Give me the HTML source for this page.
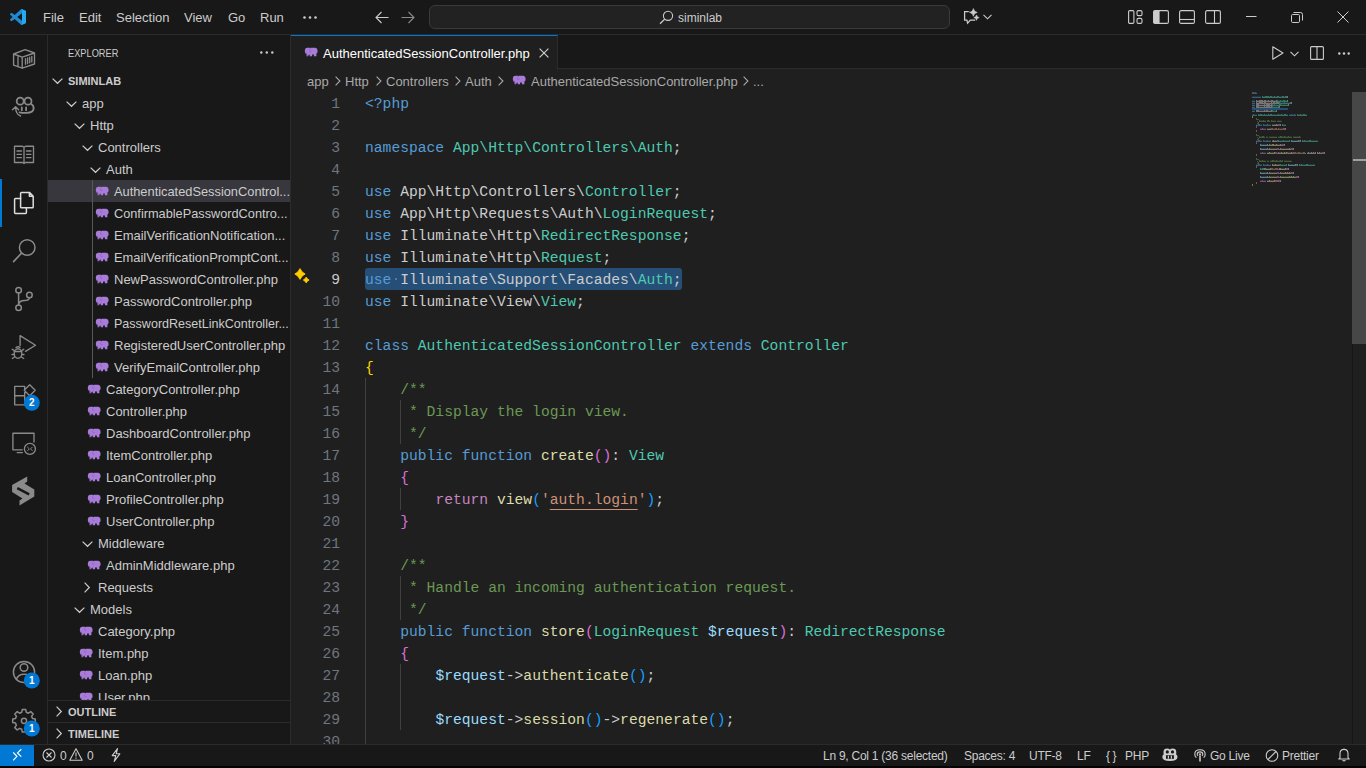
<!DOCTYPE html>
<html><head><meta charset="utf-8">
<style>
*{box-sizing:border-box}
html,body{margin:0;padding:0}
body{width:1366px;height:768px;overflow:hidden;position:relative;background:#1f1f1f;font-family:"Liberation Sans",sans-serif;color:#cccccc}
.a{position:absolute}
svg{position:absolute;overflow:visible}
#title{left:0;top:0;width:1366px;height:35px;background:#181818;border-bottom:1px solid #2b2b2b}
.menu{top:1px;height:34px;line-height:34px;font-size:13px;color:#cccccc;white-space:nowrap}
#act{left:0;top:35px;width:48px;height:709px;background:#181818;border-right:1px solid #2b2b2b}
#side{left:48px;top:35px;width:243px;height:709px;background:#181818;border-right:1px solid #2b2b2b}
.ti{margin-top:1px;height:22px;line-height:22px;font-size:13px;color:#cccccc;white-space:nowrap}
#status{left:0;top:744px;width:1366px;height:24px;background:#181818;border-top:1px solid #2b2b2b}
.st{font-size:12px;letter-spacing:-0.25px;color:#cccccc;white-space:nowrap}
.code{left:365px;height:22px;line-height:22px;font-family:"Liberation Mono",monospace;font-size:14.667px;white-space:pre;color:#cccccc}
.ln{left:300px;width:40px;text-align:right;height:22px;line-height:22px;font-family:"Liberation Mono",monospace;font-size:14.667px;color:#6e7681}
.k{color:#569cd6}.t{color:#4ec9b0}.f{color:#dcdcaa}.v{color:#9cdcfe}.s{color:#ce9178}.c{color:#6a9955}
.p{color:#c586c0}.u{text-decoration:underline;text-decoration-thickness:1px;text-underline-offset:5px}.b1{color:#ffd700}.b2{color:#da70d6}.b3{color:#179fff}
</style></head><body>
<!-- TITLE BAR -->
<div id="title" class="a"></div>
<svg style="left:10px;top:9px" width="16" height="16" viewBox="0 0 100 100"><path fill="#1f8ad2" d="M96.5 10.8 75.9.9a6.2 6.2 0 0 0-7.1 1.2L29.4 38 12.2 25a4.1 4.1 0 0 0-5.3.2L1.4 30.3a4.1 4.1 0 0 0 0 6.1L16.3 50 1.4 63.6a4.1 4.1 0 0 0 0 6.1l5.5 5a4.1 4.1 0 0 0 5.3.2l17.2-13L68.8 97.9a6.2 6.2 0 0 0 7.1 1.2l20.6-9.9a6.2 6.2 0 0 0 3.5-5.6V16.4a6.2 6.2 0 0 0-3.5-5.6zM75 72.7 45.1 50 75 27.3v45.4z"/><path fill="#27a7f0" d="M68.8 2.1a6.2 6.2 0 0 1 7.1-1.2l20.6 9.9a6.2 6.2 0 0 1 3.5 5.6v67.2a6.2 6.2 0 0 1-3.5 5.6l-20.6 9.9a6.2 6.2 0 0 1-7.1-1.2c2.3 2.3 6.2.7 6.2-2.6V4.7c0-3.3-3.9-4.9-6.2-2.6z"/></svg>
<div class="a menu" style="left:43px">File</div>
<div class="a menu" style="left:79px">Edit</div>
<div class="a menu" style="left:116px">Selection</div>
<div class="a menu" style="left:184px">View</div>
<div class="a menu" style="left:228px">Go</div>
<div class="a menu" style="left:260px">Run</div>
<svg style="left:303px;top:16px" width="14" height="3"><circle cx="1.5" cy="1.5" r="1.3" fill="#cccccc"/><circle cx="7" cy="1.5" r="1.3" fill="#cccccc"/><circle cx="12.5" cy="1.5" r="1.3" fill="#cccccc"/></svg>
<svg style="left:375px;top:11px" width="14" height="13" viewBox="0 0 14 13"><path d="M6.5 1 1 6.5 6.5 12M1 6.5H13.5" fill="none" stroke="#cccccc" stroke-width="1.1"/></svg>
<svg style="left:401px;top:11px" width="14" height="13" viewBox="0 0 14 13"><path d="M7.5 1 13 6.5 7.5 12M13 6.5H0.5" fill="none" stroke="#8a8a8a" stroke-width="1.1"/></svg>
<div class="a" style="left:429px;top:5px;width:521px;height:24px;border:1px solid #3a3a3a;border-radius:6px;background:#222222"></div>
<svg style="left:659px;top:10px" width="15" height="15" viewBox="0 0 15 15"><circle cx="9" cy="5.8" r="4.6" fill="none" stroke="#cccccc" stroke-width="1.1"/><path d="M5.7 9.1 1 13.8" stroke="#cccccc" stroke-width="1.3"/></svg>
<div class="a menu" style="left:678px;font-size:12px;top:1px">siminlab</div>
<svg style="left:958px;top:4px" width="24" height="24" viewBox="958 4 24 24"><path d="M969.6 11.6H964.6V20.2H966.9L967.6 23.2 970.3 20.2H975.3" fill="none" stroke="#cccccc" stroke-width="1.25"/><path d="M973.4 8.100000000000001Q973.92 11.88 977.6999999999999 12.4Q973.92 12.92 973.4 16.7Q972.88 12.92 969.1 12.4Q972.88 11.88 973.4 8.100000000000001Z" fill="#181818" stroke="#181818" stroke-width="1.6" stroke-linejoin="round"/><path d="M976.5 14.500000000000002Q976.87 17.23 979.6 17.6Q976.87 17.97 976.5 20.700000000000003Q976.13 17.97 973.4 17.6Q976.13 17.23 976.5 14.500000000000002Z" fill="#181818" stroke="#181818" stroke-width="1.4" stroke-linejoin="round"/><path d="M973.4 8.600000000000001Q973.86 11.94 977.1999999999999 12.4Q973.86 12.86 973.4 16.2Q972.94 12.86 969.6 12.4Q972.94 11.94 973.4 8.600000000000001Z" fill="#cccccc" stroke="#cccccc" stroke-width="0.7" stroke-linejoin="round"/><path d="M976.5 14.900000000000002Q976.82 17.28 979.2 17.6Q976.82 17.92 976.5 20.3Q976.18 17.92 973.8 17.6Q976.18 17.28 976.5 14.900000000000002Z" fill="#cccccc" stroke="#cccccc" stroke-width="0.6" stroke-linejoin="round"/></svg>
<svg style="left:983px;top:14px" width="9" height="6" viewBox="0 0 9 6"><path d="M0.5 0.8 4.5 4.8 8.5 0.8" fill="none" stroke="#cccccc" stroke-width="1.1"/></svg>
<svg style="left:1128px;top:10px" width="15" height="14" viewBox="0 0 15 14"><rect x="0.6" y="0.6" width="5.3" height="12.8" rx="1.2" fill="none" stroke="#cccccc" stroke-width="1.1"/><rect x="9" y="0.6" width="5" height="5" rx="1.4" fill="none" stroke="#cccccc" stroke-width="1.1"/><rect x="9" y="8.4" width="5" height="5" rx="1.4" fill="none" stroke="#cccccc" stroke-width="1.1"/></svg>
<svg style="left:1153px;top:10px" width="16" height="14" viewBox="0 0 16 14"><rect x="0.6" y="0.6" width="14.8" height="12.8" rx="1.5" fill="none" stroke="#cccccc" stroke-width="1.1"/><rect x="0.6" y="0.6" width="6" height="12.8" fill="#cccccc"/></svg>
<svg style="left:1179px;top:10px" width="16" height="14" viewBox="0 0 16 14"><rect x="0.6" y="0.6" width="14.8" height="12.8" rx="1.5" fill="none" stroke="#cccccc" stroke-width="1.1"/><path d="M0.6 9.5H15.4" stroke="#cccccc" stroke-width="1.1"/></svg>
<svg style="left:1205px;top:10px" width="16" height="14" viewBox="0 0 16 14"><rect x="0.6" y="0.6" width="14.8" height="12.8" rx="1.5" fill="none" stroke="#cccccc" stroke-width="1.1"/><path d="M9.5 0.6V13.4" stroke="#cccccc" stroke-width="1.1"/></svg>
<svg style="left:1246px;top:16px" width="11" height="2"><path d="M0 0.5H10.5" stroke="#cccccc" stroke-width="1"/></svg>
<svg style="left:1291px;top:12px" width="12" height="11" viewBox="0 0 12 11"><rect x="0.5" y="2.5" width="8" height="8" rx="1.2" fill="none" stroke="#cccccc" stroke-width="1"/><path d="M2.5 0.5H9.5Q11.5 0.5 11.5 2.5V8.5" fill="none" stroke="#cccccc" stroke-width="1"/></svg>
<svg style="left:1337px;top:11px" width="12" height="12" viewBox="0 0 12 12"><path d="M0.5 0.5 11.5 11.5M11.5 0.5 0.5 11.5" stroke="#cccccc" stroke-width="1"/></svg>
<div id="act" class="a"></div>
<div class="a" style="left:0;top:179px;width:2px;height:48px;background:#0078d4"></div>
<svg style="left:0;top:0" width="48" height="768" viewBox="0 0 48 768">
<g fill="none" stroke="#8a8a8a" stroke-width="1.35" stroke-linejoin="round" stroke-linecap="round">
<path d="M13.6 54 25.1 49.6 34.5 53V64L22.2 68.2 13.6 65.2Z M13.6 54 22.2 57.1 34.5 53 M22.2 57.1V68.2 M18 55.7V66.7 M25.5 58.6V64.2 M27.6 57.9V63.5 M29.7 57.2V62.8 M31.8 56.5V62.1"/>
<g stroke-width="1.8"><circle cx="20.2" cy="101.2" r="3.5"/><circle cx="28" cy="101.2" r="3.5"/>
<path d="M31.5 104.2Q34 105.5 33.6 109Q33 112.5 27 112.8Q22 113 19.5 112.3"/>
<path d="M21.8 107.5V110.3M26.1 107.5V110.3"/></g>
<path d="M20.5 116Q15.8 114.5 15.6 107M12.5 109.8 15.6 106.8 18.6 109.8"/>
<path d="M14.5 146.2H22.5L24 147.3 25.5 146.2H33.5V162.5H25.5L24 163.5 22.5 162.5H14.5Z M24 147.3V163 M17 151H21.5M17 154.3H21.5M17 157.6H21.5M26.5 151H31M26.5 154.3H31M26.5 157.6H31"/>
<path d="M21.4 192.4H29.4L33.2 196.2V206.9Q33.2 207.7 32.4 207.7H21.4Q20.6 207.7 20.6 206.9V193.2Q20.6 192.4 21.4 192.4Z M29.4 192.4V196.2H33.2" stroke="#dcdcdc" stroke-width="1.5"/><path d="M20.6 198.5H15.4Q14.6 198.5 14.6 199.3V212.6Q14.6 213.4 15.4 213.4H25.6Q26.4 213.4 26.4 212.6V207.7" stroke="#dcdcdc" stroke-width="1.5"/>
<circle cx="27.2" cy="247.5" r="7.8" stroke-width="1.5"/><path d="M21.6 253.1 13.5 261.6" stroke-width="1.6"/>
<g stroke-width="1.5"><circle cx="18.6" cy="290.2" r="2.8"/><circle cx="18.6" cy="307.8" r="2.8"/><circle cx="29.4" cy="295" r="2.8"/><path d="M18.6 293V305 M18.6 304.6Q19.2 300.8 24.5 300.6Q28.8 300.4 29.4 297.8"/></g>
<path d="M20.1 345.6V335.6L35.5 345.2 25.5 351.4"/>
<ellipse cx="18" cy="353.5" rx="3.8" ry="4.8"/><path d="M14.2 351.5H21.8M12.3 349.3 14.3 350.5M23.7 349.3 21.7 350.5M12 354.5H14.2M24 354.5H21.8M12.3 358.5 14.6 357M23.7 358.5 21.4 357M16 347.5Q18 346 20 347.5"/>
<path d="M14.7 386.3H24.7V404.8H14.7Z M14.7 395.7H24.7 M29.7 384.7 35.2 390.2 29.7 395.7 24.2 390.2Z"/>
<path d="M34 442V433.2H12.9V449.8H22.2M17.2 452.6H22.4"/>
<circle cx="29.9" cy="448.9" r="5.5"/><path d="M27.6 447.2 29.3 448.9 27.6 450.6M32.2 447.2 30.5 448.9 32.2 450.6" stroke-width="1"/>
<g stroke-width="1.5"><circle cx="24" cy="672" r="10.6"/><circle cx="24" cy="667.5" r="3.8"/><path d="M16.3 679.5Q18 674.3 24 674.3Q30 674.3 31.7 679.5"/></g>
</g>
<path d="M27.2 476.5V481.5L24.5 483.5 34.3 489.5V496.5L19.5 505.5V500.5L22.5 498.5 12.1 492V485Z" fill="#8a8a8a"/>
<path d="M17.3 488.2 29.2 494.3" stroke="#181818" stroke-width="2.6"/>
<path fill="none" stroke="#8a8a8a" stroke-width="1.5" stroke-linejoin="round" d="M22.3 709.5H25.7L26.3 712.3 28.4 713.2 30.8 711.6 33.2 714 31.6 716.4 32.5 718.5 35.3 719.1V722.5L32.5 723.1 31.6 725.2 33.2 727.6 30.8 730 28.4 728.4 26.3 729.3 25.7 732.1H22.3L21.7 729.3 19.6 728.4 17.2 730 14.8 727.6 16.4 725.2 15.5 723.1 12.7 722.5V719.1L15.5 718.5 16.4 716.4 14.8 714 17.2 711.6 19.6 713.2 21.7 712.3Z"/>
<circle cx="24" cy="720.8" r="2.6" fill="none" stroke="#8a8a8a" stroke-width="1.5"/>
<circle cx="31.8" cy="402.8" r="8" fill="#0078d4"/><text x="31.8" y="406.3" text-anchor="middle" font-family="Liberation Sans" font-weight="bold" font-size="10" fill="#ffffff">2</text>
<circle cx="31.8" cy="680.5" r="8" fill="#0078d4"/><text x="31.8" y="684" text-anchor="middle" font-family="Liberation Sans" font-weight="bold" font-size="10" fill="#ffffff">1</text>
<circle cx="31.8" cy="728.5" r="8" fill="#0078d4"/><text x="31.8" y="732" text-anchor="middle" font-family="Liberation Sans" font-weight="bold" font-size="10" fill="#ffffff">1</text>
</svg>
<div id="side" class="a"></div>
<svg width="0" height="0" style="left:0;top:0"><defs><symbol id="el" viewBox="0 0 14 10"><path fill="#a87cd8" d="M0.8 4.2Q0.8 0.8 3.4 0.8H6L6.5 1.3 7 0.8H11Q13.6 0.9 13.6 4.4Q13.6 5.8 12.4 6.6V9.3H9.9V7.4H8.1V9.3H5.7V7.6Q5 7.6 4.7 8.1L4 9.3H2.6L2.7 7.8Q0.8 6.6 0.8 4.2Z"/><path d="M6.5 1.3Q5.2 2.5 5.6 4.2Q6.2 4.9 7.6 4.5" fill="none" stroke="#8a62bd" stroke-width="0.7"/><path d="M2 5.6Q3 6.8 3.2 9.2" fill="none" stroke="#6a4a96" stroke-width="0.6"/></symbol></defs></svg>
<div class="a" style="left:68px;top:36px;height:35px;line-height:35px;font-size:11px;color:#cccccc;transform:scaleX(0.84);transform-origin:0 0;white-space:nowrap">EXPLORER</div>
<svg style="left:260px;top:51px" width="14" height="3"><circle cx="1.3" cy="1.5" r="1.2" fill="#cccccc"/><circle cx="6.8" cy="1.5" r="1.2" fill="#cccccc"/><circle cx="12.3" cy="1.5" r="1.2" fill="#cccccc"/></svg>
<svg style="left:52px;top:78px" width="11" height="6" viewBox="0 0 11 6"><path d="M0.6 0.6 5.5 5.3 10.4 0.6" fill="none" stroke="#cccccc" stroke-width="1.2"/></svg>
<div class="a" style="left:68px;top:70px;height:22px;line-height:22px;font-size:11px;font-weight:bold;color:#cccccc;white-space:nowrap">SIMINLAB</div>
<div class="a" style="left:0;top:0;width:290px;height:700px;overflow:hidden">
<div class="a" style="left:48px;top:180px;width:242px;height:22px;background:#37373d"></div>
<div class="a" style="left:92px;top:180px;width:1px;height:198px;background:#585858"></div>
<svg style="left:66px;top:101px" width="11" height="6" viewBox="0 0 11 6"><path d="M0.6 0.6 5.5 5.3 10.4 0.6" fill="none" stroke="#cccccc" stroke-width="1.2"/></svg>
<div class="a ti" style="left:82px;top:92px">app</div>
<svg style="left:74px;top:123px" width="11" height="6" viewBox="0 0 11 6"><path d="M0.6 0.6 5.5 5.3 10.4 0.6" fill="none" stroke="#cccccc" stroke-width="1.2"/></svg>
<div class="a ti" style="left:90px;top:114px">Http</div>
<svg style="left:82px;top:145px" width="11" height="6" viewBox="0 0 11 6"><path d="M0.6 0.6 5.5 5.3 10.4 0.6" fill="none" stroke="#cccccc" stroke-width="1.2"/></svg>
<div class="a ti" style="left:98px;top:136px">Controllers</div>
<svg style="left:90px;top:167px" width="11" height="6" viewBox="0 0 11 6"><path d="M0.6 0.6 5.5 5.3 10.4 0.6" fill="none" stroke="#cccccc" stroke-width="1.2"/></svg>
<div class="a ti" style="left:106px;top:158px">Auth</div>
<svg style="left:95px;top:186px" width="14" height="10" viewBox="0 0 14 10"><use href="#el"/></svg>
<div class="a ti" style="left:114px;transform:scaleX(0.986);transform-origin:0 0;top:180px">AuthenticatedSessionControl...</div>
<svg style="left:95px;top:208px" width="14" height="10" viewBox="0 0 14 10"><use href="#el"/></svg>
<div class="a ti" style="left:114px;transform:scaleX(0.98);transform-origin:0 0;top:202px">ConfirmablePasswordContro...</div>
<svg style="left:95px;top:230px" width="14" height="10" viewBox="0 0 14 10"><use href="#el"/></svg>
<div class="a ti" style="left:114px;transform:scaleX(1.0);transform-origin:0 0;top:224px">EmailVerificationNotification...</div>
<svg style="left:95px;top:252px" width="14" height="10" viewBox="0 0 14 10"><use href="#el"/></svg>
<div class="a ti" style="left:114px;transform:scaleX(0.99);transform-origin:0 0;top:246px">EmailVerificationPromptCont...</div>
<svg style="left:95px;top:274px" width="14" height="10" viewBox="0 0 14 10"><use href="#el"/></svg>
<div class="a ti" style="left:114px;width:176px;overflow:hidden;text-overflow:ellipsis;top:268px">NewPasswordController.php</div>
<svg style="left:95px;top:296px" width="14" height="10" viewBox="0 0 14 10"><use href="#el"/></svg>
<div class="a ti" style="left:114px;width:176px;overflow:hidden;text-overflow:ellipsis;top:290px">PasswordController.php</div>
<svg style="left:95px;top:318px" width="14" height="10" viewBox="0 0 14 10"><use href="#el"/></svg>
<div class="a ti" style="left:114px;transform:scaleX(0.964);transform-origin:0 0;top:312px">PasswordResetLinkController...</div>
<svg style="left:95px;top:340px" width="14" height="10" viewBox="0 0 14 10"><use href="#el"/></svg>
<div class="a ti" style="left:114px;width:176px;overflow:hidden;text-overflow:ellipsis;top:334px">RegisteredUserController.php</div>
<svg style="left:95px;top:362px" width="14" height="10" viewBox="0 0 14 10"><use href="#el"/></svg>
<div class="a ti" style="left:114px;width:176px;overflow:hidden;text-overflow:ellipsis;top:356px">VerifyEmailController.php</div>
<svg style="left:87px;top:384px" width="14" height="10" viewBox="0 0 14 10"><use href="#el"/></svg>
<div class="a ti" style="left:106px;top:378px">CategoryController.php</div>
<svg style="left:87px;top:406px" width="14" height="10" viewBox="0 0 14 10"><use href="#el"/></svg>
<div class="a ti" style="left:106px;top:400px">Controller.php</div>
<svg style="left:87px;top:428px" width="14" height="10" viewBox="0 0 14 10"><use href="#el"/></svg>
<div class="a ti" style="left:106px;top:422px">DashboardController.php</div>
<svg style="left:87px;top:450px" width="14" height="10" viewBox="0 0 14 10"><use href="#el"/></svg>
<div class="a ti" style="left:106px;top:444px">ItemController.php</div>
<svg style="left:87px;top:472px" width="14" height="10" viewBox="0 0 14 10"><use href="#el"/></svg>
<div class="a ti" style="left:106px;top:466px">LoanController.php</div>
<svg style="left:87px;top:494px" width="14" height="10" viewBox="0 0 14 10"><use href="#el"/></svg>
<div class="a ti" style="left:106px;top:488px">ProfileController.php</div>
<svg style="left:87px;top:516px" width="14" height="10" viewBox="0 0 14 10"><use href="#el"/></svg>
<div class="a ti" style="left:106px;top:510px">UserController.php</div>
<svg style="left:82px;top:541px" width="11" height="6" viewBox="0 0 11 6"><path d="M0.6 0.6 5.5 5.3 10.4 0.6" fill="none" stroke="#cccccc" stroke-width="1.2"/></svg>
<div class="a ti" style="left:98px;top:532px">Middleware</div>
<svg style="left:87px;top:560px" width="14" height="10" viewBox="0 0 14 10"><use href="#el"/></svg>
<div class="a ti" style="left:106px;top:554px">AdminMiddleware.php</div>
<svg style="left:84px;top:582px" width="6" height="11" viewBox="0 0 6 11"><path d="M0.6 0.6 5.3 5.5 0.6 10.4" fill="none" stroke="#cccccc" stroke-width="1.2"/></svg>
<div class="a ti" style="left:98px;top:576px">Requests</div>
<svg style="left:74px;top:607px" width="11" height="6" viewBox="0 0 11 6"><path d="M0.6 0.6 5.5 5.3 10.4 0.6" fill="none" stroke="#cccccc" stroke-width="1.2"/></svg>
<div class="a ti" style="left:90px;top:598px">Models</div>
<svg style="left:79px;top:626px" width="14" height="10" viewBox="0 0 14 10"><use href="#el"/></svg>
<div class="a ti" style="left:98px;top:620px">Category.php</div>
<svg style="left:79px;top:648px" width="14" height="10" viewBox="0 0 14 10"><use href="#el"/></svg>
<div class="a ti" style="left:98px;top:642px">Item.php</div>
<svg style="left:79px;top:670px" width="14" height="10" viewBox="0 0 14 10"><use href="#el"/></svg>
<div class="a ti" style="left:98px;top:664px">Loan.php</div>
<svg style="left:79px;top:692px" width="14" height="10" viewBox="0 0 14 10"><use href="#el"/></svg>
<div class="a ti" style="left:98px;top:686px">User.php</div>
</div>
<div class="a" style="left:48px;top:700px;width:242px;height:44px;background:#181818;border-top:1px solid #2b2b2b"></div>
<div class="a" style="left:48px;top:722px;width:242px;height:1px;background:#2b2b2b"></div>
<svg style="left:56px;top:706px" width="6" height="11" viewBox="0 0 6 11"><path d="M0.6 0.6 5.3 5.5 0.6 10.4" fill="none" stroke="#cccccc" stroke-width="1.2"/></svg>
<div class="a" style="left:68px;top:701px;height:22px;line-height:22px;font-size:11px;font-weight:bold;color:#cccccc">OUTLINE</div>
<svg style="left:56px;top:728px" width="6" height="11" viewBox="0 0 6 11"><path d="M0.6 0.6 5.3 5.5 0.6 10.4" fill="none" stroke="#cccccc" stroke-width="1.2"/></svg>
<div class="a" style="left:68px;top:723px;height:22px;line-height:22px;font-size:11px;font-weight:bold;color:#cccccc">TIMELINE</div>
<div class="a" style="left:291px;top:35px;width:1075px;height:34px;background:#181818;border-bottom:1px solid #2b2b2b"></div>
<div class="a" style="left:291px;top:35px;width:267px;height:35px;background:#1f1f1f;border-top:1px solid #0078d4;border-right:1px solid #2b2b2b"></div>
<svg style="left:304px;top:47px" width="14" height="10" viewBox="0 0 14 10"><use href="#el"/></svg>
<div class="a ti" style="left:323px;top:42px;color:#ffffff">AuthenticatedSessionController.php</div>
<svg style="left:539px;top:48px" width="10" height="10" viewBox="0 0 10 10"><path d="M0.6 0.6 9.4 9.4M9.4 0.6 0.6 9.4" stroke="#cccccc" stroke-width="1.2"/></svg>
<svg style="left:1272px;top:46px" width="12" height="14" viewBox="0 0 12 14"><path d="M0.8 0.8 11 7 0.8 13.2Z" fill="none" stroke="#cccccc" stroke-width="1.1" stroke-linejoin="round"/></svg>
<svg style="left:1290px;top:51px" width="9" height="6" viewBox="0 0 9 6"><path d="M0.5 0.8 4.5 4.8 8.5 0.8" fill="none" stroke="#cccccc" stroke-width="1.1"/></svg>
<svg style="left:1310px;top:46px" width="14" height="14" viewBox="0 0 14 14"><rect x="0.6" y="0.6" width="12.8" height="12.8" rx="1" fill="none" stroke="#cccccc" stroke-width="1.1"/><path d="M7 0.6V13.4" stroke="#cccccc" stroke-width="1.1"/></svg>
<svg style="left:1338px;top:52px" width="12" height="3"><circle cx="1.3" cy="1.5" r="1.2" fill="#cccccc"/><circle cx="6" cy="1.5" r="1.2" fill="#cccccc"/><circle cx="10.7" cy="1.5" r="1.2" fill="#cccccc"/></svg>
<div class="a ti" style="left:307px;top:70px;color:#a9a9a9">app</div>
<svg style="left:335px;top:76px" width="6" height="10" viewBox="0 0 6 10"><path d="M0.6 0.6 4.9 5 0.6 9.4" fill="none" stroke="#a9a9a9" stroke-width="1.1"/></svg>
<div class="a ti" style="left:345px;top:70px;color:#a9a9a9">Http</div>
<svg style="left:376px;top:76px" width="6" height="10" viewBox="0 0 6 10"><path d="M0.6 0.6 4.9 5 0.6 9.4" fill="none" stroke="#a9a9a9" stroke-width="1.1"/></svg>
<div class="a ti" style="left:386px;top:70px;color:#a9a9a9">Controllers</div>
<svg style="left:455px;top:76px" width="6" height="10" viewBox="0 0 6 10"><path d="M0.6 0.6 4.9 5 0.6 9.4" fill="none" stroke="#a9a9a9" stroke-width="1.1"/></svg>
<div class="a ti" style="left:465px;top:70px;color:#a9a9a9">Auth</div>
<svg style="left:498px;top:76px" width="6" height="10" viewBox="0 0 6 10"><path d="M0.6 0.6 4.9 5 0.6 9.4" fill="none" stroke="#a9a9a9" stroke-width="1.1"/></svg>
<svg style="left:512px;top:75px" width="14" height="10" viewBox="0 0 14 10"><use href="#el"/></svg>
<div class="a ti" style="left:531px;top:70px;color:#a9a9a9">AuthenticatedSessionController.php</div>
<svg style="left:743px;top:76px" width="6" height="10" viewBox="0 0 6 10"><path d="M0.6 0.6 4.9 5 0.6 9.4" fill="none" stroke="#a9a9a9" stroke-width="1.1"/></svg>
<div class="a ti" style="left:753px;top:70px;color:#a9a9a9">...</div>
<div class="a" style="left:365px;top:378px;width:1px;height:366px;background:#404040"></div>
<div class="a" style="left:400px;top:400px;width:1px;height:44px;background:#404040"></div>
<div class="a" style="left:400px;top:488px;width:1px;height:22px;background:#404040"></div>
<div class="a" style="left:400px;top:576px;width:1px;height:44px;background:#404040"></div>
<div class="a" style="left:400px;top:664px;width:1px;height:66px;background:#404040"></div>
<div class="a" style="left:365px;top:268px;width:317px;height:22px;background:#264f78;border-radius:3px"></div>
<div class="a" style="left:395px;top:278px;width:2px;height:2px;background:#6b89a8;border-radius:1px"></div>
<svg style="left:294px;top:268px" width="16" height="16" viewBox="0 0 16 16"><path d="M6 0.6Q7.6 4.4 11.2 6Q7.6 7.6 6 11.4Q4.4 7.6 0.8 6Q4.4 4.4 6 0.6Z" fill="#ffcc00" stroke="#ffcc00" stroke-width="0.8" stroke-linejoin="round"/><path d="M12.2 9Q13.1 11.1 15.2 12Q13.1 12.9 12.2 15Q11.3 12.9 9.2 12Q11.3 11.1 12.2 9Z" fill="#ffcc00" stroke="#ffcc00" stroke-width="0.7" stroke-linejoin="round"/></svg>
<div class="a ln" style="top:93px;color:#6e7681">1</div>
<div class="a code" style="top:93px"><span class="k">&lt;?php</span></div>
<div class="a ln" style="top:115px;color:#6e7681">2</div>
<div class="a ln" style="top:137px;color:#6e7681">3</div>
<div class="a code" style="top:137px"><span class="k">namespace</span> <span class="t">App\Http\Controllers\Auth</span>;</div>
<div class="a ln" style="top:159px;color:#6e7681">4</div>
<div class="a ln" style="top:181px;color:#6e7681">5</div>
<div class="a code" style="top:181px"><span class="k">use</span> App\Http\Controllers\<span class="t">Controller</span>;</div>
<div class="a ln" style="top:203px;color:#6e7681">6</div>
<div class="a code" style="top:203px"><span class="k">use</span> App\Http\Requests\Auth\<span class="t">LoginRequest</span>;</div>
<div class="a ln" style="top:225px;color:#6e7681">7</div>
<div class="a code" style="top:225px"><span class="k">use</span> Illuminate\Http\<span class="t">RedirectResponse</span>;</div>
<div class="a ln" style="top:247px;color:#6e7681">8</div>
<div class="a code" style="top:247px"><span class="k">use</span> Illuminate\Http\<span class="t">Request</span>;</div>
<div class="a ln" style="top:269px;color:#cccccc">9</div>
<div class="a code" style="top:269px"><span class="k">use</span> Illuminate\Support\Facades\<span class="t">Auth</span>;</div>
<div class="a ln" style="top:291px;color:#6e7681">10</div>
<div class="a code" style="top:291px"><span class="k">use</span> Illuminate\View\<span class="t">View</span>;</div>
<div class="a ln" style="top:313px;color:#6e7681">11</div>
<div class="a ln" style="top:335px;color:#6e7681">12</div>
<div class="a code" style="top:335px"><span class="k">class</span> <span class="t">AuthenticatedSessionController</span> <span class="k">extends</span> <span class="t">Controller</span></div>
<div class="a ln" style="top:357px;color:#6e7681">13</div>
<div class="a code" style="top:357px"><span class="b1">{</span></div>
<div class="a ln" style="top:379px;color:#6e7681">14</div>
<div class="a code" style="top:379px">    <span class="c">/**</span></div>
<div class="a ln" style="top:401px;color:#6e7681">15</div>
<div class="a code" style="top:401px">    <span class="c"> * Display the login view.</span></div>
<div class="a ln" style="top:423px;color:#6e7681">16</div>
<div class="a code" style="top:423px">    <span class="c"> */</span></div>
<div class="a ln" style="top:445px;color:#6e7681">17</div>
<div class="a code" style="top:445px">    <span class="k">public</span> <span class="k">function</span> <span class="f">create</span><span class="b2">()</span>: <span class="t">View</span></div>
<div class="a ln" style="top:467px;color:#6e7681">18</div>
<div class="a code" style="top:467px">    <span class="b2">{</span></div>
<div class="a ln" style="top:489px;color:#6e7681">19</div>
<div class="a code" style="top:489px">        <span class="p">return</span> <span class="f">view</span><span class="b3">(</span><span class="s">'</span><span class="s u">auth.login</span><span class="s">'</span><span class="b3">)</span>;</div>
<div class="a ln" style="top:511px;color:#6e7681">20</div>
<div class="a code" style="top:511px">    <span class="b2">}</span></div>
<div class="a ln" style="top:533px;color:#6e7681">21</div>
<div class="a ln" style="top:555px;color:#6e7681">22</div>
<div class="a code" style="top:555px">    <span class="c">/**</span></div>
<div class="a ln" style="top:577px;color:#6e7681">23</div>
<div class="a code" style="top:577px">    <span class="c"> * Handle an incoming authentication request.</span></div>
<div class="a ln" style="top:599px;color:#6e7681">24</div>
<div class="a code" style="top:599px">    <span class="c"> */</span></div>
<div class="a ln" style="top:621px;color:#6e7681">25</div>
<div class="a code" style="top:621px">    <span class="k">public</span> <span class="k">function</span> <span class="f">store</span><span class="b2">(</span><span class="t">LoginRequest</span> <span class="v">$request</span><span class="b2">)</span>: <span class="t">RedirectResponse</span></div>
<div class="a ln" style="top:643px;color:#6e7681">26</div>
<div class="a code" style="top:643px">    <span class="b2">{</span></div>
<div class="a ln" style="top:665px;color:#6e7681">27</div>
<div class="a code" style="top:665px">        <span class="v">$request</span>-&gt;<span class="f">authenticate</span><span class="b3">()</span>;</div>
<div class="a ln" style="top:687px;color:#6e7681">28</div>
<div class="a ln" style="top:709px;color:#6e7681">29</div>
<div class="a code" style="top:709px">        <span class="v">$request</span>-&gt;<span class="f">session</span><span class="b3">()</span>-&gt;<span class="f">regenerate</span><span class="b3">()</span>;</div>
<div class="a ln" style="top:731px;color:#6e7681">30</div>
<svg style="left:1248px;top:0" width="104" height="768" viewBox="1248 0 104 768"><g opacity="0.55"><rect x="1252" y="92.1" width="1" height="1.8" fill="#569cd6"/><rect x="1253" y="92.1" width="1" height="1.8" fill="#569cd6"/><rect x="1254" y="92.7" width="1" height="1.3" fill="#569cd6"/><rect x="1255" y="92.1" width="1" height="1.8" fill="#569cd6"/><rect x="1256" y="92.7" width="1" height="1.3" fill="#569cd6"/><rect x="1252" y="96.7" width="1" height="1.2" fill="#569cd6"/><rect x="1253" y="96.7" width="1" height="1.2" fill="#569cd6"/><rect x="1254" y="96.7" width="1" height="1.2" fill="#569cd6"/><rect x="1255" y="96.7" width="1" height="1.2" fill="#569cd6"/><rect x="1256" y="96.7" width="1" height="1.2" fill="#569cd6"/><rect x="1257" y="96.7" width="1" height="1.3" fill="#569cd6"/><rect x="1258" y="96.7" width="1" height="1.2" fill="#569cd6"/><rect x="1259" y="96.7" width="1" height="1.2" fill="#569cd6"/><rect x="1260" y="96.7" width="1" height="1.2" fill="#569cd6"/><rect x="1262" y="96.1" width="1" height="1.8" fill="#4ec9b0"/><rect x="1263" y="96.7" width="1" height="1.3" fill="#4ec9b0"/><rect x="1264" y="96.7" width="1" height="1.3" fill="#4ec9b0"/><rect x="1265" y="96.1" width="1" height="1.8" fill="#4ec9b0"/><rect x="1266" y="96.1" width="1" height="1.8" fill="#4ec9b0"/><rect x="1267" y="96.1" width="1" height="1.8" fill="#4ec9b0"/><rect x="1268" y="96.1" width="1" height="1.8" fill="#4ec9b0"/><rect x="1269" y="96.7" width="1" height="1.3" fill="#4ec9b0"/><rect x="1270" y="96.1" width="1" height="1.8" fill="#4ec9b0"/><rect x="1271" y="96.1" width="1" height="1.8" fill="#4ec9b0"/><rect x="1272" y="96.7" width="1" height="1.2" fill="#4ec9b0"/><rect x="1273" y="96.7" width="1" height="1.2" fill="#4ec9b0"/><rect x="1274" y="96.1" width="1" height="1.8" fill="#4ec9b0"/><rect x="1275" y="96.7" width="1" height="1.2" fill="#4ec9b0"/><rect x="1276" y="96.7" width="1" height="1.2" fill="#4ec9b0"/><rect x="1277" y="96.1" width="1" height="1.8" fill="#4ec9b0"/><rect x="1278" y="96.1" width="1" height="1.8" fill="#4ec9b0"/><rect x="1279" y="96.7" width="1" height="1.2" fill="#4ec9b0"/><rect x="1280" y="96.7" width="1" height="1.2" fill="#4ec9b0"/><rect x="1281" y="96.7" width="1" height="1.2" fill="#4ec9b0"/><rect x="1282" y="96.1" width="1" height="1.8" fill="#4ec9b0"/><rect x="1283" y="96.1" width="1" height="1.8" fill="#4ec9b0"/><rect x="1284" y="96.7" width="1" height="1.2" fill="#4ec9b0"/><rect x="1285" y="96.1" width="1" height="1.8" fill="#4ec9b0"/><rect x="1286" y="96.1" width="1" height="1.8" fill="#4ec9b0"/><rect x="1287" y="96.1" width="1" height="1.8" fill="#cccccc"/><rect x="1252" y="100.7" width="1" height="1.2" fill="#569cd6"/><rect x="1253" y="100.7" width="1" height="1.2" fill="#569cd6"/><rect x="1254" y="100.7" width="1" height="1.2" fill="#569cd6"/><rect x="1256" y="100.1" width="1" height="1.8" fill="#cccccc"/><rect x="1257" y="100.7" width="1" height="1.3" fill="#cccccc"/><rect x="1258" y="100.7" width="1" height="1.3" fill="#cccccc"/><rect x="1259" y="100.1" width="1" height="1.8" fill="#cccccc"/><rect x="1260" y="100.1" width="1" height="1.8" fill="#cccccc"/><rect x="1261" y="100.1" width="1" height="1.8" fill="#cccccc"/><rect x="1262" y="100.1" width="1" height="1.8" fill="#cccccc"/><rect x="1263" y="100.7" width="1" height="1.3" fill="#cccccc"/><rect x="1264" y="100.1" width="1" height="1.8" fill="#cccccc"/><rect x="1265" y="100.1" width="1" height="1.8" fill="#cccccc"/><rect x="1266" y="100.7" width="1" height="1.2" fill="#cccccc"/><rect x="1267" y="100.7" width="1" height="1.2" fill="#cccccc"/><rect x="1268" y="100.1" width="1" height="1.8" fill="#cccccc"/><rect x="1269" y="100.7" width="1" height="1.2" fill="#cccccc"/><rect x="1270" y="100.7" width="1" height="1.2" fill="#cccccc"/><rect x="1271" y="100.1" width="1" height="1.8" fill="#cccccc"/><rect x="1272" y="100.1" width="1" height="1.8" fill="#cccccc"/><rect x="1273" y="100.7" width="1" height="1.2" fill="#cccccc"/><rect x="1274" y="100.7" width="1" height="1.2" fill="#cccccc"/><rect x="1275" y="100.7" width="1" height="1.2" fill="#cccccc"/><rect x="1276" y="100.1" width="1" height="1.8" fill="#cccccc"/><rect x="1277" y="100.1" width="1" height="1.8" fill="#4ec9b0"/><rect x="1278" y="100.7" width="1" height="1.2" fill="#4ec9b0"/><rect x="1279" y="100.7" width="1" height="1.2" fill="#4ec9b0"/><rect x="1280" y="100.1" width="1" height="1.8" fill="#4ec9b0"/><rect x="1281" y="100.7" width="1" height="1.2" fill="#4ec9b0"/><rect x="1282" y="100.7" width="1" height="1.2" fill="#4ec9b0"/><rect x="1283" y="100.1" width="1" height="1.8" fill="#4ec9b0"/><rect x="1284" y="100.1" width="1" height="1.8" fill="#4ec9b0"/><rect x="1285" y="100.7" width="1" height="1.2" fill="#4ec9b0"/><rect x="1286" y="100.7" width="1" height="1.2" fill="#4ec9b0"/><rect x="1287" y="100.1" width="1" height="1.8" fill="#cccccc"/><rect x="1252" y="102.7" width="1" height="1.2" fill="#569cd6"/><rect x="1253" y="102.7" width="1" height="1.2" fill="#569cd6"/><rect x="1254" y="102.7" width="1" height="1.2" fill="#569cd6"/><rect x="1256" y="102.1" width="1" height="1.8" fill="#cccccc"/><rect x="1257" y="102.7" width="1" height="1.3" fill="#cccccc"/><rect x="1258" y="102.7" width="1" height="1.3" fill="#cccccc"/><rect x="1259" y="102.1" width="1" height="1.8" fill="#cccccc"/><rect x="1260" y="102.1" width="1" height="1.8" fill="#cccccc"/><rect x="1261" y="102.1" width="1" height="1.8" fill="#cccccc"/><rect x="1262" y="102.1" width="1" height="1.8" fill="#cccccc"/><rect x="1263" y="102.7" width="1" height="1.3" fill="#cccccc"/><rect x="1264" y="102.1" width="1" height="1.8" fill="#cccccc"/><rect x="1265" y="102.1" width="1" height="1.8" fill="#cccccc"/><rect x="1266" y="102.7" width="1" height="1.2" fill="#cccccc"/><rect x="1267" y="102.7" width="1" height="1.3" fill="#cccccc"/><rect x="1268" y="102.7" width="1" height="1.2" fill="#cccccc"/><rect x="1269" y="102.7" width="1" height="1.2" fill="#cccccc"/><rect x="1270" y="102.7" width="1" height="1.2" fill="#cccccc"/><rect x="1271" y="102.1" width="1" height="1.8" fill="#cccccc"/><rect x="1272" y="102.7" width="1" height="1.2" fill="#cccccc"/><rect x="1273" y="102.1" width="1" height="1.8" fill="#cccccc"/><rect x="1274" y="102.1" width="1" height="1.8" fill="#cccccc"/><rect x="1275" y="102.7" width="1" height="1.2" fill="#cccccc"/><rect x="1276" y="102.1" width="1" height="1.8" fill="#cccccc"/><rect x="1277" y="102.1" width="1" height="1.8" fill="#cccccc"/><rect x="1278" y="102.1" width="1" height="1.8" fill="#cccccc"/><rect x="1279" y="102.1" width="1" height="1.8" fill="#4ec9b0"/><rect x="1280" y="102.7" width="1" height="1.2" fill="#4ec9b0"/><rect x="1281" y="102.7" width="1" height="1.3" fill="#4ec9b0"/><rect x="1282" y="102.7" width="1" height="1.2" fill="#4ec9b0"/><rect x="1283" y="102.7" width="1" height="1.2" fill="#4ec9b0"/><rect x="1284" y="102.1" width="1" height="1.8" fill="#4ec9b0"/><rect x="1285" y="102.7" width="1" height="1.2" fill="#4ec9b0"/><rect x="1286" y="102.7" width="1" height="1.3" fill="#4ec9b0"/><rect x="1287" y="102.7" width="1" height="1.2" fill="#4ec9b0"/><rect x="1288" y="102.7" width="1" height="1.2" fill="#4ec9b0"/><rect x="1289" y="102.7" width="1" height="1.2" fill="#4ec9b0"/><rect x="1290" y="102.1" width="1" height="1.8" fill="#4ec9b0"/><rect x="1291" y="102.1" width="1" height="1.8" fill="#cccccc"/><rect x="1252" y="104.7" width="1" height="1.2" fill="#569cd6"/><rect x="1253" y="104.7" width="1" height="1.2" fill="#569cd6"/><rect x="1254" y="104.7" width="1" height="1.2" fill="#569cd6"/><rect x="1256" y="104.1" width="1" height="1.8" fill="#cccccc"/><rect x="1257" y="104.1" width="1" height="1.8" fill="#cccccc"/><rect x="1258" y="104.1" width="1" height="1.8" fill="#cccccc"/><rect x="1259" y="104.7" width="1" height="1.2" fill="#cccccc"/><rect x="1260" y="104.7" width="1" height="1.2" fill="#cccccc"/><rect x="1261" y="104.7" width="1" height="1.2" fill="#cccccc"/><rect x="1262" y="104.7" width="1" height="1.2" fill="#cccccc"/><rect x="1263" y="104.7" width="1" height="1.2" fill="#cccccc"/><rect x="1264" y="104.1" width="1" height="1.8" fill="#cccccc"/><rect x="1265" y="104.7" width="1" height="1.2" fill="#cccccc"/><rect x="1266" y="104.1" width="1" height="1.8" fill="#cccccc"/><rect x="1267" y="104.1" width="1" height="1.8" fill="#cccccc"/><rect x="1268" y="104.1" width="1" height="1.8" fill="#cccccc"/><rect x="1269" y="104.1" width="1" height="1.8" fill="#cccccc"/><rect x="1270" y="104.7" width="1" height="1.3" fill="#cccccc"/><rect x="1271" y="104.1" width="1" height="1.8" fill="#cccccc"/><rect x="1272" y="104.1" width="1" height="1.8" fill="#4ec9b0"/><rect x="1273" y="104.7" width="1" height="1.2" fill="#4ec9b0"/><rect x="1274" y="104.1" width="1" height="1.8" fill="#4ec9b0"/><rect x="1275" y="104.7" width="1" height="1.2" fill="#4ec9b0"/><rect x="1276" y="104.7" width="1" height="1.2" fill="#4ec9b0"/><rect x="1277" y="104.7" width="1" height="1.2" fill="#4ec9b0"/><rect x="1278" y="104.7" width="1" height="1.2" fill="#4ec9b0"/><rect x="1279" y="104.1" width="1" height="1.8" fill="#4ec9b0"/><rect x="1280" y="104.1" width="1" height="1.8" fill="#4ec9b0"/><rect x="1281" y="104.7" width="1" height="1.2" fill="#4ec9b0"/><rect x="1282" y="104.7" width="1" height="1.2" fill="#4ec9b0"/><rect x="1283" y="104.7" width="1" height="1.3" fill="#4ec9b0"/><rect x="1284" y="104.7" width="1" height="1.2" fill="#4ec9b0"/><rect x="1285" y="104.7" width="1" height="1.2" fill="#4ec9b0"/><rect x="1286" y="104.7" width="1" height="1.2" fill="#4ec9b0"/><rect x="1287" y="104.7" width="1" height="1.2" fill="#4ec9b0"/><rect x="1288" y="104.1" width="1" height="1.8" fill="#cccccc"/><rect x="1252" y="106.7" width="1" height="1.2" fill="#569cd6"/><rect x="1253" y="106.7" width="1" height="1.2" fill="#569cd6"/><rect x="1254" y="106.7" width="1" height="1.2" fill="#569cd6"/><rect x="1256" y="106.1" width="1" height="1.8" fill="#cccccc"/><rect x="1257" y="106.1" width="1" height="1.8" fill="#cccccc"/><rect x="1258" y="106.1" width="1" height="1.8" fill="#cccccc"/><rect x="1259" y="106.7" width="1" height="1.2" fill="#cccccc"/><rect x="1260" y="106.7" width="1" height="1.2" fill="#cccccc"/><rect x="1261" y="106.7" width="1" height="1.2" fill="#cccccc"/><rect x="1262" y="106.7" width="1" height="1.2" fill="#cccccc"/><rect x="1263" y="106.7" width="1" height="1.2" fill="#cccccc"/><rect x="1264" y="106.1" width="1" height="1.8" fill="#cccccc"/><rect x="1265" y="106.7" width="1" height="1.2" fill="#cccccc"/><rect x="1266" y="106.1" width="1" height="1.8" fill="#cccccc"/><rect x="1267" y="106.1" width="1" height="1.8" fill="#cccccc"/><rect x="1268" y="106.1" width="1" height="1.8" fill="#cccccc"/><rect x="1269" y="106.1" width="1" height="1.8" fill="#cccccc"/><rect x="1270" y="106.7" width="1" height="1.3" fill="#cccccc"/><rect x="1271" y="106.1" width="1" height="1.8" fill="#cccccc"/><rect x="1272" y="106.1" width="1" height="1.8" fill="#4ec9b0"/><rect x="1273" y="106.7" width="1" height="1.2" fill="#4ec9b0"/><rect x="1274" y="106.7" width="1" height="1.3" fill="#4ec9b0"/><rect x="1275" y="106.7" width="1" height="1.2" fill="#4ec9b0"/><rect x="1276" y="106.7" width="1" height="1.2" fill="#4ec9b0"/><rect x="1277" y="106.7" width="1" height="1.2" fill="#4ec9b0"/><rect x="1278" y="106.1" width="1" height="1.8" fill="#4ec9b0"/><rect x="1279" y="106.1" width="1" height="1.8" fill="#cccccc"/><rect x="1252" y="108.7" width="1" height="1.2" fill="#569cd6"/><rect x="1253" y="108.7" width="1" height="1.2" fill="#569cd6"/><rect x="1254" y="108.7" width="1" height="1.2" fill="#569cd6"/><rect x="1256" y="108.1" width="1" height="1.8" fill="#cccccc"/><rect x="1257" y="108.1" width="1" height="1.8" fill="#cccccc"/><rect x="1258" y="108.1" width="1" height="1.8" fill="#cccccc"/><rect x="1259" y="108.7" width="1" height="1.2" fill="#cccccc"/><rect x="1260" y="108.7" width="1" height="1.2" fill="#cccccc"/><rect x="1261" y="108.7" width="1" height="1.2" fill="#cccccc"/><rect x="1262" y="108.7" width="1" height="1.2" fill="#cccccc"/><rect x="1263" y="108.7" width="1" height="1.2" fill="#cccccc"/><rect x="1264" y="108.1" width="1" height="1.8" fill="#cccccc"/><rect x="1265" y="108.7" width="1" height="1.2" fill="#cccccc"/><rect x="1266" y="108.1" width="1" height="1.8" fill="#cccccc"/><rect x="1267" y="108.1" width="1" height="1.8" fill="#cccccc"/><rect x="1268" y="108.7" width="1" height="1.2" fill="#cccccc"/><rect x="1269" y="108.7" width="1" height="1.3" fill="#cccccc"/><rect x="1270" y="108.7" width="1" height="1.3" fill="#cccccc"/><rect x="1271" y="108.7" width="1" height="1.2" fill="#cccccc"/><rect x="1272" y="108.7" width="1" height="1.2" fill="#cccccc"/><rect x="1273" y="108.1" width="1" height="1.8" fill="#cccccc"/><rect x="1274" y="108.1" width="1" height="1.8" fill="#cccccc"/><rect x="1275" y="108.1" width="1" height="1.8" fill="#cccccc"/><rect x="1276" y="108.7" width="1" height="1.2" fill="#cccccc"/><rect x="1277" y="108.7" width="1" height="1.2" fill="#cccccc"/><rect x="1278" y="108.7" width="1" height="1.2" fill="#cccccc"/><rect x="1279" y="108.1" width="1" height="1.8" fill="#cccccc"/><rect x="1280" y="108.7" width="1" height="1.2" fill="#cccccc"/><rect x="1281" y="108.7" width="1" height="1.2" fill="#cccccc"/><rect x="1282" y="108.1" width="1" height="1.8" fill="#cccccc"/><rect x="1283" y="108.1" width="1" height="1.8" fill="#4ec9b0"/><rect x="1284" y="108.7" width="1" height="1.2" fill="#4ec9b0"/><rect x="1285" y="108.1" width="1" height="1.8" fill="#4ec9b0"/><rect x="1286" y="108.1" width="1" height="1.8" fill="#4ec9b0"/><rect x="1287" y="108.1" width="1" height="1.8" fill="#cccccc"/><rect x="1252" y="110.7" width="1" height="1.2" fill="#569cd6"/><rect x="1253" y="110.7" width="1" height="1.2" fill="#569cd6"/><rect x="1254" y="110.7" width="1" height="1.2" fill="#569cd6"/><rect x="1256" y="110.1" width="1" height="1.8" fill="#cccccc"/><rect x="1257" y="110.1" width="1" height="1.8" fill="#cccccc"/><rect x="1258" y="110.1" width="1" height="1.8" fill="#cccccc"/><rect x="1259" y="110.7" width="1" height="1.2" fill="#cccccc"/><rect x="1260" y="110.7" width="1" height="1.2" fill="#cccccc"/><rect x="1261" y="110.7" width="1" height="1.2" fill="#cccccc"/><rect x="1262" y="110.7" width="1" height="1.2" fill="#cccccc"/><rect x="1263" y="110.7" width="1" height="1.2" fill="#cccccc"/><rect x="1264" y="110.1" width="1" height="1.8" fill="#cccccc"/><rect x="1265" y="110.7" width="1" height="1.2" fill="#cccccc"/><rect x="1266" y="110.1" width="1" height="1.8" fill="#cccccc"/><rect x="1267" y="110.1" width="1" height="1.8" fill="#cccccc"/><rect x="1268" y="110.7" width="1" height="1.2" fill="#cccccc"/><rect x="1269" y="110.7" width="1" height="1.2" fill="#cccccc"/><rect x="1270" y="110.7" width="1" height="1.2" fill="#cccccc"/><rect x="1271" y="110.1" width="1" height="1.8" fill="#cccccc"/><rect x="1272" y="110.1" width="1" height="1.8" fill="#4ec9b0"/><rect x="1273" y="110.7" width="1" height="1.2" fill="#4ec9b0"/><rect x="1274" y="110.7" width="1" height="1.2" fill="#4ec9b0"/><rect x="1275" y="110.7" width="1" height="1.2" fill="#4ec9b0"/><rect x="1276" y="110.1" width="1" height="1.8" fill="#cccccc"/><rect x="1252" y="114.7" width="1" height="1.2" fill="#569cd6"/><rect x="1253" y="114.1" width="1" height="1.8" fill="#569cd6"/><rect x="1254" y="114.7" width="1" height="1.2" fill="#569cd6"/><rect x="1255" y="114.7" width="1" height="1.2" fill="#569cd6"/><rect x="1256" y="114.7" width="1" height="1.2" fill="#569cd6"/><rect x="1258" y="114.1" width="1" height="1.8" fill="#4ec9b0"/><rect x="1259" y="114.7" width="1" height="1.2" fill="#4ec9b0"/><rect x="1260" y="114.1" width="1" height="1.8" fill="#4ec9b0"/><rect x="1261" y="114.1" width="1" height="1.8" fill="#4ec9b0"/><rect x="1262" y="114.7" width="1" height="1.2" fill="#4ec9b0"/><rect x="1263" y="114.7" width="1" height="1.2" fill="#4ec9b0"/><rect x="1264" y="114.1" width="1" height="1.8" fill="#4ec9b0"/><rect x="1265" y="114.7" width="1" height="1.2" fill="#4ec9b0"/><rect x="1266" y="114.7" width="1" height="1.2" fill="#4ec9b0"/><rect x="1267" y="114.7" width="1" height="1.2" fill="#4ec9b0"/><rect x="1268" y="114.1" width="1" height="1.8" fill="#4ec9b0"/><rect x="1269" y="114.7" width="1" height="1.2" fill="#4ec9b0"/><rect x="1270" y="114.1" width="1" height="1.8" fill="#4ec9b0"/><rect x="1271" y="114.1" width="1" height="1.8" fill="#4ec9b0"/><rect x="1272" y="114.7" width="1" height="1.2" fill="#4ec9b0"/><rect x="1273" y="114.7" width="1" height="1.2" fill="#4ec9b0"/><rect x="1274" y="114.7" width="1" height="1.2" fill="#4ec9b0"/><rect x="1275" y="114.7" width="1" height="1.2" fill="#4ec9b0"/><rect x="1276" y="114.7" width="1" height="1.2" fill="#4ec9b0"/><rect x="1277" y="114.7" width="1" height="1.2" fill="#4ec9b0"/><rect x="1278" y="114.1" width="1" height="1.8" fill="#4ec9b0"/><rect x="1279" y="114.7" width="1" height="1.2" fill="#4ec9b0"/><rect x="1280" y="114.7" width="1" height="1.2" fill="#4ec9b0"/><rect x="1281" y="114.1" width="1" height="1.8" fill="#4ec9b0"/><rect x="1282" y="114.7" width="1" height="1.2" fill="#4ec9b0"/><rect x="1283" y="114.7" width="1" height="1.2" fill="#4ec9b0"/><rect x="1284" y="114.1" width="1" height="1.8" fill="#4ec9b0"/><rect x="1285" y="114.1" width="1" height="1.8" fill="#4ec9b0"/><rect x="1286" y="114.7" width="1" height="1.2" fill="#4ec9b0"/><rect x="1287" y="114.7" width="1" height="1.2" fill="#4ec9b0"/><rect x="1289" y="114.7" width="1" height="1.2" fill="#569cd6"/><rect x="1290" y="114.7" width="1" height="1.2" fill="#569cd6"/><rect x="1291" y="114.1" width="1" height="1.8" fill="#569cd6"/><rect x="1292" y="114.7" width="1" height="1.2" fill="#569cd6"/><rect x="1293" y="114.7" width="1" height="1.2" fill="#569cd6"/><rect x="1294" y="114.1" width="1" height="1.8" fill="#569cd6"/><rect x="1295" y="114.7" width="1" height="1.2" fill="#569cd6"/><rect x="1297" y="114.1" width="1" height="1.8" fill="#4ec9b0"/><rect x="1298" y="114.7" width="1" height="1.2" fill="#4ec9b0"/><rect x="1299" y="114.7" width="1" height="1.2" fill="#4ec9b0"/><rect x="1300" y="114.1" width="1" height="1.8" fill="#4ec9b0"/><rect x="1301" y="114.7" width="1" height="1.2" fill="#4ec9b0"/><rect x="1302" y="114.7" width="1" height="1.2" fill="#4ec9b0"/><rect x="1303" y="114.1" width="1" height="1.8" fill="#4ec9b0"/><rect x="1304" y="114.1" width="1" height="1.8" fill="#4ec9b0"/><rect x="1305" y="114.7" width="1" height="1.2" fill="#4ec9b0"/><rect x="1306" y="114.7" width="1" height="1.2" fill="#4ec9b0"/><rect x="1252" y="116.1" width="1" height="1.8" fill="#ffd700"/><rect x="1256" y="118.1" width="1" height="1.8" fill="#6a9955"/><rect x="1257" y="119.1" width="1" height="0.8" fill="#6a9955"/><rect x="1258" y="119.1" width="1" height="0.8" fill="#6a9955"/><rect x="1257" y="121.1" width="1" height="0.8" fill="#6a9955"/><rect x="1259" y="120.1" width="1" height="1.8" fill="#6a9955"/><rect x="1260" y="120.7" width="1" height="1.2" fill="#6a9955"/><rect x="1261" y="120.7" width="1" height="1.2" fill="#6a9955"/><rect x="1262" y="120.7" width="1" height="1.3" fill="#6a9955"/><rect x="1263" y="120.1" width="1" height="1.8" fill="#6a9955"/><rect x="1264" y="120.7" width="1" height="1.2" fill="#6a9955"/><rect x="1265" y="120.7" width="1" height="1.3" fill="#6a9955"/><rect x="1267" y="120.1" width="1" height="1.8" fill="#6a9955"/><rect x="1268" y="120.1" width="1" height="1.8" fill="#6a9955"/><rect x="1269" y="120.7" width="1" height="1.2" fill="#6a9955"/><rect x="1271" y="120.1" width="1" height="1.8" fill="#6a9955"/><rect x="1272" y="120.7" width="1" height="1.2" fill="#6a9955"/><rect x="1273" y="120.7" width="1" height="1.3" fill="#6a9955"/><rect x="1274" y="120.7" width="1" height="1.2" fill="#6a9955"/><rect x="1275" y="120.7" width="1" height="1.2" fill="#6a9955"/><rect x="1277" y="120.7" width="1" height="1.2" fill="#6a9955"/><rect x="1278" y="120.7" width="1" height="1.2" fill="#6a9955"/><rect x="1279" y="120.7" width="1" height="1.2" fill="#6a9955"/><rect x="1280" y="120.7" width="1" height="1.2" fill="#6a9955"/><rect x="1281" y="121.1" width="1" height="0.8" fill="#6a9955"/><rect x="1257" y="123.1" width="1" height="0.8" fill="#6a9955"/><rect x="1258" y="122.1" width="1" height="1.8" fill="#6a9955"/><rect x="1256" y="124.7" width="1" height="1.3" fill="#569cd6"/><rect x="1257" y="124.7" width="1" height="1.2" fill="#569cd6"/><rect x="1258" y="124.1" width="1" height="1.8" fill="#569cd6"/><rect x="1259" y="124.1" width="1" height="1.8" fill="#569cd6"/><rect x="1260" y="124.7" width="1" height="1.2" fill="#569cd6"/><rect x="1261" y="124.7" width="1" height="1.2" fill="#569cd6"/><rect x="1263" y="124.1" width="1" height="1.8" fill="#569cd6"/><rect x="1264" y="124.7" width="1" height="1.2" fill="#569cd6"/><rect x="1265" y="124.7" width="1" height="1.2" fill="#569cd6"/><rect x="1266" y="124.7" width="1" height="1.2" fill="#569cd6"/><rect x="1267" y="124.1" width="1" height="1.8" fill="#569cd6"/><rect x="1268" y="124.7" width="1" height="1.2" fill="#569cd6"/><rect x="1269" y="124.7" width="1" height="1.2" fill="#569cd6"/><rect x="1270" y="124.7" width="1" height="1.2" fill="#569cd6"/><rect x="1272" y="124.7" width="1" height="1.2" fill="#dcdcaa"/><rect x="1273" y="124.7" width="1" height="1.2" fill="#dcdcaa"/><rect x="1274" y="124.7" width="1" height="1.2" fill="#dcdcaa"/><rect x="1275" y="124.7" width="1" height="1.2" fill="#dcdcaa"/><rect x="1276" y="124.1" width="1" height="1.8" fill="#dcdcaa"/><rect x="1277" y="124.7" width="1" height="1.2" fill="#dcdcaa"/><rect x="1278" y="124.1" width="1" height="1.8" fill="#da70d6"/><rect x="1279" y="124.1" width="1" height="1.8" fill="#da70d6"/><rect x="1280" y="124.1" width="1" height="1.8" fill="#cccccc"/><rect x="1282" y="124.1" width="1" height="1.8" fill="#4ec9b0"/><rect x="1283" y="124.7" width="1" height="1.2" fill="#4ec9b0"/><rect x="1284" y="124.7" width="1" height="1.2" fill="#4ec9b0"/><rect x="1285" y="124.7" width="1" height="1.2" fill="#4ec9b0"/><rect x="1256" y="126.1" width="1" height="1.8" fill="#da70d6"/><rect x="1260" y="128.7" width="1" height="1.2" fill="#c586c0"/><rect x="1261" y="128.7" width="1" height="1.2" fill="#c586c0"/><rect x="1262" y="128.1" width="1" height="1.8" fill="#c586c0"/><rect x="1263" y="128.7" width="1" height="1.2" fill="#c586c0"/><rect x="1264" y="128.7" width="1" height="1.2" fill="#c586c0"/><rect x="1265" y="128.7" width="1" height="1.2" fill="#c586c0"/><rect x="1267" y="128.7" width="1" height="1.2" fill="#dcdcaa"/><rect x="1268" y="128.7" width="1" height="1.2" fill="#dcdcaa"/><rect x="1269" y="128.7" width="1" height="1.2" fill="#dcdcaa"/><rect x="1270" y="128.7" width="1" height="1.2" fill="#dcdcaa"/><rect x="1271" y="128.1" width="1" height="1.8" fill="#da70d6"/><rect x="1272" y="128.1" width="1" height="1.8" fill="#ce9178"/><rect x="1273" y="128.7" width="1" height="1.2" fill="#ce9178"/><rect x="1274" y="128.7" width="1" height="1.2" fill="#ce9178"/><rect x="1275" y="128.1" width="1" height="1.8" fill="#ce9178"/><rect x="1276" y="128.1" width="1" height="1.8" fill="#ce9178"/><rect x="1277" y="129.1" width="1" height="0.8" fill="#ce9178"/><rect x="1278" y="128.1" width="1" height="1.8" fill="#ce9178"/><rect x="1279" y="128.7" width="1" height="1.2" fill="#ce9178"/><rect x="1280" y="128.7" width="1" height="1.3" fill="#ce9178"/><rect x="1281" y="128.7" width="1" height="1.2" fill="#ce9178"/><rect x="1282" y="128.7" width="1" height="1.2" fill="#ce9178"/><rect x="1283" y="128.1" width="1" height="1.8" fill="#ce9178"/><rect x="1284" y="128.1" width="1" height="1.8" fill="#da70d6"/><rect x="1285" y="128.1" width="1" height="1.8" fill="#cccccc"/><rect x="1256" y="130.1" width="1" height="1.8" fill="#da70d6"/><rect x="1256" y="134.1" width="1" height="1.8" fill="#6a9955"/><rect x="1257" y="135.1" width="1" height="0.8" fill="#6a9955"/><rect x="1258" y="135.1" width="1" height="0.8" fill="#6a9955"/><rect x="1257" y="137.1" width="1" height="0.8" fill="#6a9955"/><rect x="1259" y="136.1" width="1" height="1.8" fill="#6a9955"/><rect x="1260" y="136.7" width="1" height="1.2" fill="#6a9955"/><rect x="1261" y="136.7" width="1" height="1.2" fill="#6a9955"/><rect x="1262" y="136.1" width="1" height="1.8" fill="#6a9955"/><rect x="1263" y="136.1" width="1" height="1.8" fill="#6a9955"/><rect x="1264" y="136.7" width="1" height="1.2" fill="#6a9955"/><rect x="1266" y="136.7" width="1" height="1.2" fill="#6a9955"/><rect x="1267" y="136.7" width="1" height="1.2" fill="#6a9955"/><rect x="1269" y="136.7" width="1" height="1.2" fill="#6a9955"/><rect x="1270" y="136.7" width="1" height="1.2" fill="#6a9955"/><rect x="1271" y="136.7" width="1" height="1.2" fill="#6a9955"/><rect x="1272" y="136.7" width="1" height="1.2" fill="#6a9955"/><rect x="1273" y="136.7" width="1" height="1.2" fill="#6a9955"/><rect x="1274" y="136.7" width="1" height="1.2" fill="#6a9955"/><rect x="1275" y="136.7" width="1" height="1.2" fill="#6a9955"/><rect x="1276" y="136.7" width="1" height="1.3" fill="#6a9955"/><rect x="1278" y="136.7" width="1" height="1.2" fill="#6a9955"/><rect x="1279" y="136.7" width="1" height="1.2" fill="#6a9955"/><rect x="1280" y="136.1" width="1" height="1.8" fill="#6a9955"/><rect x="1281" y="136.1" width="1" height="1.8" fill="#6a9955"/><rect x="1282" y="136.7" width="1" height="1.2" fill="#6a9955"/><rect x="1283" y="136.7" width="1" height="1.2" fill="#6a9955"/><rect x="1284" y="136.1" width="1" height="1.8" fill="#6a9955"/><rect x="1285" y="136.7" width="1" height="1.2" fill="#6a9955"/><rect x="1286" y="136.7" width="1" height="1.2" fill="#6a9955"/><rect x="1287" y="136.7" width="1" height="1.2" fill="#6a9955"/><rect x="1288" y="136.1" width="1" height="1.8" fill="#6a9955"/><rect x="1289" y="136.7" width="1" height="1.2" fill="#6a9955"/><rect x="1290" y="136.7" width="1" height="1.2" fill="#6a9955"/><rect x="1291" y="136.7" width="1" height="1.2" fill="#6a9955"/><rect x="1293" y="136.7" width="1" height="1.2" fill="#6a9955"/><rect x="1294" y="136.7" width="1" height="1.2" fill="#6a9955"/><rect x="1295" y="136.7" width="1" height="1.3" fill="#6a9955"/><rect x="1296" y="136.7" width="1" height="1.2" fill="#6a9955"/><rect x="1297" y="136.7" width="1" height="1.2" fill="#6a9955"/><rect x="1298" y="136.7" width="1" height="1.2" fill="#6a9955"/><rect x="1299" y="136.1" width="1" height="1.8" fill="#6a9955"/><rect x="1300" y="137.1" width="1" height="0.8" fill="#6a9955"/><rect x="1257" y="139.1" width="1" height="0.8" fill="#6a9955"/><rect x="1258" y="138.1" width="1" height="1.8" fill="#6a9955"/><rect x="1256" y="140.7" width="1" height="1.3" fill="#569cd6"/><rect x="1257" y="140.7" width="1" height="1.2" fill="#569cd6"/><rect x="1258" y="140.1" width="1" height="1.8" fill="#569cd6"/><rect x="1259" y="140.1" width="1" height="1.8" fill="#569cd6"/><rect x="1260" y="140.7" width="1" height="1.2" fill="#569cd6"/><rect x="1261" y="140.7" width="1" height="1.2" fill="#569cd6"/><rect x="1263" y="140.1" width="1" height="1.8" fill="#569cd6"/><rect x="1264" y="140.7" width="1" height="1.2" fill="#569cd6"/><rect x="1265" y="140.7" width="1" height="1.2" fill="#569cd6"/><rect x="1266" y="140.7" width="1" height="1.2" fill="#569cd6"/><rect x="1267" y="140.1" width="1" height="1.8" fill="#569cd6"/><rect x="1268" y="140.7" width="1" height="1.2" fill="#569cd6"/><rect x="1269" y="140.7" width="1" height="1.2" fill="#569cd6"/><rect x="1270" y="140.7" width="1" height="1.2" fill="#569cd6"/><rect x="1272" y="140.7" width="1" height="1.2" fill="#dcdcaa"/><rect x="1273" y="140.1" width="1" height="1.8" fill="#dcdcaa"/><rect x="1274" y="140.7" width="1" height="1.2" fill="#dcdcaa"/><rect x="1275" y="140.7" width="1" height="1.2" fill="#dcdcaa"/><rect x="1276" y="140.7" width="1" height="1.2" fill="#dcdcaa"/><rect x="1277" y="140.1" width="1" height="1.8" fill="#da70d6"/><rect x="1278" y="140.1" width="1" height="1.8" fill="#4ec9b0"/><rect x="1279" y="140.7" width="1" height="1.2" fill="#4ec9b0"/><rect x="1280" y="140.7" width="1" height="1.3" fill="#4ec9b0"/><rect x="1281" y="140.7" width="1" height="1.2" fill="#4ec9b0"/><rect x="1282" y="140.7" width="1" height="1.2" fill="#4ec9b0"/><rect x="1283" y="140.1" width="1" height="1.8" fill="#4ec9b0"/><rect x="1284" y="140.7" width="1" height="1.2" fill="#4ec9b0"/><rect x="1285" y="140.7" width="1" height="1.3" fill="#4ec9b0"/><rect x="1286" y="140.7" width="1" height="1.2" fill="#4ec9b0"/><rect x="1287" y="140.7" width="1" height="1.2" fill="#4ec9b0"/><rect x="1288" y="140.7" width="1" height="1.2" fill="#4ec9b0"/><rect x="1289" y="140.1" width="1" height="1.8" fill="#4ec9b0"/><rect x="1291" y="140.1" width="1" height="1.8" fill="#9cdcfe"/><rect x="1292" y="140.7" width="1" height="1.2" fill="#9cdcfe"/><rect x="1293" y="140.7" width="1" height="1.2" fill="#9cdcfe"/><rect x="1294" y="140.7" width="1" height="1.3" fill="#9cdcfe"/><rect x="1295" y="140.7" width="1" height="1.2" fill="#9cdcfe"/><rect x="1296" y="140.7" width="1" height="1.2" fill="#9cdcfe"/><rect x="1297" y="140.7" width="1" height="1.2" fill="#9cdcfe"/><rect x="1298" y="140.1" width="1" height="1.8" fill="#9cdcfe"/><rect x="1299" y="140.1" width="1" height="1.8" fill="#da70d6"/><rect x="1300" y="140.1" width="1" height="1.8" fill="#cccccc"/><rect x="1302" y="140.1" width="1" height="1.8" fill="#4ec9b0"/><rect x="1303" y="140.7" width="1" height="1.2" fill="#4ec9b0"/><rect x="1304" y="140.1" width="1" height="1.8" fill="#4ec9b0"/><rect x="1305" y="140.7" width="1" height="1.2" fill="#4ec9b0"/><rect x="1306" y="140.7" width="1" height="1.2" fill="#4ec9b0"/><rect x="1307" y="140.7" width="1" height="1.2" fill="#4ec9b0"/><rect x="1308" y="140.7" width="1" height="1.2" fill="#4ec9b0"/><rect x="1309" y="140.1" width="1" height="1.8" fill="#4ec9b0"/><rect x="1310" y="140.1" width="1" height="1.8" fill="#4ec9b0"/><rect x="1311" y="140.7" width="1" height="1.2" fill="#4ec9b0"/><rect x="1312" y="140.7" width="1" height="1.2" fill="#4ec9b0"/><rect x="1313" y="140.7" width="1" height="1.3" fill="#4ec9b0"/><rect x="1314" y="140.7" width="1" height="1.2" fill="#4ec9b0"/><rect x="1315" y="140.7" width="1" height="1.2" fill="#4ec9b0"/><rect x="1316" y="140.7" width="1" height="1.2" fill="#4ec9b0"/><rect x="1317" y="140.7" width="1" height="1.2" fill="#4ec9b0"/><rect x="1256" y="142.1" width="1" height="1.8" fill="#da70d6"/><rect x="1260" y="144.1" width="1" height="1.8" fill="#9cdcfe"/><rect x="1261" y="144.7" width="1" height="1.2" fill="#9cdcfe"/><rect x="1262" y="144.7" width="1" height="1.2" fill="#9cdcfe"/><rect x="1263" y="144.7" width="1" height="1.3" fill="#9cdcfe"/><rect x="1264" y="144.7" width="1" height="1.2" fill="#9cdcfe"/><rect x="1265" y="144.7" width="1" height="1.2" fill="#9cdcfe"/><rect x="1266" y="144.7" width="1" height="1.2" fill="#9cdcfe"/><rect x="1267" y="144.1" width="1" height="1.8" fill="#9cdcfe"/><rect x="1268" y="145.1" width="1" height="0.8" fill="#cccccc"/><rect x="1269" y="144.1" width="1" height="1.8" fill="#cccccc"/><rect x="1270" y="144.7" width="1" height="1.2" fill="#dcdcaa"/><rect x="1271" y="144.7" width="1" height="1.2" fill="#dcdcaa"/><rect x="1272" y="144.1" width="1" height="1.8" fill="#dcdcaa"/><rect x="1273" y="144.1" width="1" height="1.8" fill="#dcdcaa"/><rect x="1274" y="144.7" width="1" height="1.2" fill="#dcdcaa"/><rect x="1275" y="144.7" width="1" height="1.2" fill="#dcdcaa"/><rect x="1276" y="144.1" width="1" height="1.8" fill="#dcdcaa"/><rect x="1277" y="144.7" width="1" height="1.2" fill="#dcdcaa"/><rect x="1278" y="144.7" width="1" height="1.2" fill="#dcdcaa"/><rect x="1279" y="144.7" width="1" height="1.2" fill="#dcdcaa"/><rect x="1280" y="144.1" width="1" height="1.8" fill="#dcdcaa"/><rect x="1281" y="144.7" width="1" height="1.2" fill="#dcdcaa"/><rect x="1282" y="144.1" width="1" height="1.8" fill="#da70d6"/><rect x="1283" y="144.1" width="1" height="1.8" fill="#da70d6"/><rect x="1284" y="144.1" width="1" height="1.8" fill="#cccccc"/><rect x="1260" y="148.1" width="1" height="1.8" fill="#9cdcfe"/><rect x="1261" y="148.7" width="1" height="1.2" fill="#9cdcfe"/><rect x="1262" y="148.7" width="1" height="1.2" fill="#9cdcfe"/><rect x="1263" y="148.7" width="1" height="1.3" fill="#9cdcfe"/><rect x="1264" y="148.7" width="1" height="1.2" fill="#9cdcfe"/><rect x="1265" y="148.7" width="1" height="1.2" fill="#9cdcfe"/><rect x="1266" y="148.7" width="1" height="1.2" fill="#9cdcfe"/><rect x="1267" y="148.1" width="1" height="1.8" fill="#9cdcfe"/><rect x="1268" y="149.1" width="1" height="0.8" fill="#cccccc"/><rect x="1269" y="148.1" width="1" height="1.8" fill="#cccccc"/><rect x="1270" y="148.7" width="1" height="1.2" fill="#dcdcaa"/><rect x="1271" y="148.7" width="1" height="1.2" fill="#dcdcaa"/><rect x="1272" y="148.7" width="1" height="1.2" fill="#dcdcaa"/><rect x="1273" y="148.7" width="1" height="1.2" fill="#dcdcaa"/><rect x="1274" y="148.7" width="1" height="1.2" fill="#dcdcaa"/><rect x="1275" y="148.7" width="1" height="1.2" fill="#dcdcaa"/><rect x="1276" y="148.7" width="1" height="1.2" fill="#dcdcaa"/><rect x="1277" y="148.1" width="1" height="1.8" fill="#da70d6"/><rect x="1278" y="148.1" width="1" height="1.8" fill="#da70d6"/><rect x="1279" y="149.1" width="1" height="0.8" fill="#cccccc"/><rect x="1280" y="148.1" width="1" height="1.8" fill="#cccccc"/><rect x="1281" y="148.7" width="1" height="1.2" fill="#dcdcaa"/><rect x="1282" y="148.7" width="1" height="1.2" fill="#dcdcaa"/><rect x="1283" y="148.7" width="1" height="1.3" fill="#dcdcaa"/><rect x="1284" y="148.7" width="1" height="1.2" fill="#dcdcaa"/><rect x="1285" y="148.7" width="1" height="1.2" fill="#dcdcaa"/><rect x="1286" y="148.7" width="1" height="1.2" fill="#dcdcaa"/><rect x="1287" y="148.7" width="1" height="1.2" fill="#dcdcaa"/><rect x="1288" y="148.7" width="1" height="1.2" fill="#dcdcaa"/><rect x="1289" y="148.1" width="1" height="1.8" fill="#dcdcaa"/><rect x="1290" y="148.7" width="1" height="1.2" fill="#dcdcaa"/><rect x="1291" y="148.1" width="1" height="1.8" fill="#da70d6"/><rect x="1292" y="148.1" width="1" height="1.8" fill="#da70d6"/><rect x="1293" y="148.1" width="1" height="1.8" fill="#cccccc"/><rect x="1260" y="152.7" width="1" height="1.2" fill="#c586c0"/><rect x="1261" y="152.7" width="1" height="1.2" fill="#c586c0"/><rect x="1262" y="152.1" width="1" height="1.8" fill="#c586c0"/><rect x="1263" y="152.7" width="1" height="1.2" fill="#c586c0"/><rect x="1264" y="152.7" width="1" height="1.2" fill="#c586c0"/><rect x="1265" y="152.7" width="1" height="1.2" fill="#c586c0"/><rect x="1267" y="152.7" width="1" height="1.2" fill="#dcdcaa"/><rect x="1268" y="152.7" width="1" height="1.2" fill="#dcdcaa"/><rect x="1269" y="152.1" width="1" height="1.8" fill="#dcdcaa"/><rect x="1270" y="152.7" width="1" height="1.2" fill="#dcdcaa"/><rect x="1271" y="152.7" width="1" height="1.2" fill="#dcdcaa"/><rect x="1272" y="152.7" width="1" height="1.2" fill="#dcdcaa"/><rect x="1273" y="152.7" width="1" height="1.2" fill="#dcdcaa"/><rect x="1274" y="152.1" width="1" height="1.8" fill="#dcdcaa"/><rect x="1275" y="152.1" width="1" height="1.8" fill="#da70d6"/><rect x="1276" y="152.1" width="1" height="1.8" fill="#da70d6"/><rect x="1277" y="153.1" width="1" height="0.8" fill="#cccccc"/><rect x="1278" y="152.1" width="1" height="1.8" fill="#cccccc"/><rect x="1279" y="152.7" width="1" height="1.2" fill="#dcdcaa"/><rect x="1280" y="152.7" width="1" height="1.2" fill="#dcdcaa"/><rect x="1281" y="152.1" width="1" height="1.8" fill="#dcdcaa"/><rect x="1282" y="152.7" width="1" height="1.2" fill="#dcdcaa"/><rect x="1283" y="152.7" width="1" height="1.2" fill="#dcdcaa"/><rect x="1284" y="152.1" width="1" height="1.8" fill="#dcdcaa"/><rect x="1285" y="152.7" width="1" height="1.2" fill="#dcdcaa"/><rect x="1286" y="152.1" width="1" height="1.8" fill="#dcdcaa"/><rect x="1287" y="152.1" width="1" height="1.8" fill="#da70d6"/><rect x="1288" y="152.7" width="1" height="1.2" fill="#dcdcaa"/><rect x="1289" y="152.7" width="1" height="1.2" fill="#dcdcaa"/><rect x="1290" y="152.7" width="1" height="1.2" fill="#dcdcaa"/><rect x="1291" y="152.1" width="1" height="1.8" fill="#dcdcaa"/><rect x="1292" y="152.7" width="1" height="1.2" fill="#dcdcaa"/><rect x="1293" y="152.1" width="1" height="1.8" fill="#da70d6"/><rect x="1294" y="152.1" width="1" height="1.8" fill="#ce9178"/><rect x="1295" y="152.1" width="1" height="1.8" fill="#ce9178"/><rect x="1296" y="152.7" width="1" height="1.2" fill="#ce9178"/><rect x="1297" y="152.7" width="1" height="1.2" fill="#ce9178"/><rect x="1298" y="152.1" width="1" height="1.8" fill="#ce9178"/><rect x="1299" y="152.1" width="1" height="1.8" fill="#ce9178"/><rect x="1300" y="152.7" width="1" height="1.2" fill="#ce9178"/><rect x="1301" y="152.7" width="1" height="1.2" fill="#ce9178"/><rect x="1302" y="152.7" width="1" height="1.2" fill="#ce9178"/><rect x="1303" y="152.1" width="1" height="1.8" fill="#ce9178"/><rect x="1304" y="152.1" width="1" height="1.8" fill="#ce9178"/><rect x="1305" y="153.1" width="1" height="0.8" fill="#cccccc"/><rect x="1307" y="152.7" width="1" height="1.2" fill="#cccccc"/><rect x="1308" y="152.1" width="1" height="1.8" fill="#cccccc"/><rect x="1309" y="152.7" width="1" height="1.2" fill="#cccccc"/><rect x="1310" y="152.7" width="1" height="1.2" fill="#cccccc"/><rect x="1311" y="152.1" width="1" height="1.8" fill="#cccccc"/><rect x="1312" y="152.7" width="1" height="1.2" fill="#cccccc"/><rect x="1313" y="152.1" width="1" height="1.8" fill="#cccccc"/><rect x="1314" y="152.7" width="1" height="1.2" fill="#cccccc"/><rect x="1315" y="152.1" width="1" height="1.8" fill="#cccccc"/><rect x="1317" y="152.1" width="1" height="1.8" fill="#cccccc"/><rect x="1318" y="152.7" width="1" height="1.2" fill="#cccccc"/><rect x="1319" y="152.1" width="1" height="1.8" fill="#cccccc"/><rect x="1320" y="152.7" width="1" height="1.2" fill="#cccccc"/><rect x="1321" y="152.7" width="1" height="1.2" fill="#cccccc"/><rect x="1322" y="152.1" width="1" height="1.8" fill="#da70d6"/><rect x="1323" y="152.1" width="1" height="1.8" fill="#da70d6"/><rect x="1324" y="152.1" width="1" height="1.8" fill="#cccccc"/><rect x="1256" y="154.1" width="1" height="1.8" fill="#da70d6"/><rect x="1256" y="158.1" width="1" height="1.8" fill="#6a9955"/><rect x="1257" y="159.1" width="1" height="0.8" fill="#6a9955"/><rect x="1258" y="159.1" width="1" height="0.8" fill="#6a9955"/><rect x="1257" y="161.1" width="1" height="0.8" fill="#6a9955"/><rect x="1259" y="160.1" width="1" height="1.8" fill="#6a9955"/><rect x="1260" y="160.7" width="1" height="1.2" fill="#6a9955"/><rect x="1261" y="160.7" width="1" height="1.2" fill="#6a9955"/><rect x="1262" y="160.1" width="1" height="1.8" fill="#6a9955"/><rect x="1263" y="160.7" width="1" height="1.2" fill="#6a9955"/><rect x="1264" y="160.7" width="1" height="1.2" fill="#6a9955"/><rect x="1265" y="160.7" width="1" height="1.3" fill="#6a9955"/><rect x="1267" y="160.7" width="1" height="1.2" fill="#6a9955"/><rect x="1268" y="160.7" width="1" height="1.2" fill="#6a9955"/><rect x="1270" y="160.7" width="1" height="1.2" fill="#6a9955"/><rect x="1271" y="160.7" width="1" height="1.2" fill="#6a9955"/><rect x="1272" y="160.1" width="1" height="1.8" fill="#6a9955"/><rect x="1273" y="160.1" width="1" height="1.8" fill="#6a9955"/><rect x="1274" y="160.7" width="1" height="1.2" fill="#6a9955"/><rect x="1275" y="160.7" width="1" height="1.2" fill="#6a9955"/><rect x="1276" y="160.1" width="1" height="1.8" fill="#6a9955"/><rect x="1277" y="160.7" width="1" height="1.2" fill="#6a9955"/><rect x="1278" y="160.7" width="1" height="1.2" fill="#6a9955"/><rect x="1279" y="160.7" width="1" height="1.2" fill="#6a9955"/><rect x="1280" y="160.1" width="1" height="1.8" fill="#6a9955"/><rect x="1281" y="160.7" width="1" height="1.2" fill="#6a9955"/><rect x="1282" y="160.1" width="1" height="1.8" fill="#6a9955"/><rect x="1284" y="160.7" width="1" height="1.2" fill="#6a9955"/><rect x="1285" y="160.7" width="1" height="1.2" fill="#6a9955"/><rect x="1286" y="160.7" width="1" height="1.2" fill="#6a9955"/><rect x="1287" y="160.7" width="1" height="1.2" fill="#6a9955"/><rect x="1288" y="160.7" width="1" height="1.2" fill="#6a9955"/><rect x="1289" y="160.7" width="1" height="1.2" fill="#6a9955"/><rect x="1290" y="160.7" width="1" height="1.2" fill="#6a9955"/><rect x="1291" y="161.1" width="1" height="0.8" fill="#6a9955"/><rect x="1257" y="163.1" width="1" height="0.8" fill="#6a9955"/><rect x="1258" y="162.1" width="1" height="1.8" fill="#6a9955"/><rect x="1256" y="164.7" width="1" height="1.3" fill="#569cd6"/><rect x="1257" y="164.7" width="1" height="1.2" fill="#569cd6"/><rect x="1258" y="164.1" width="1" height="1.8" fill="#569cd6"/><rect x="1259" y="164.1" width="1" height="1.8" fill="#569cd6"/><rect x="1260" y="164.7" width="1" height="1.2" fill="#569cd6"/><rect x="1261" y="164.7" width="1" height="1.2" fill="#569cd6"/><rect x="1263" y="164.1" width="1" height="1.8" fill="#569cd6"/><rect x="1264" y="164.7" width="1" height="1.2" fill="#569cd6"/><rect x="1265" y="164.7" width="1" height="1.2" fill="#569cd6"/><rect x="1266" y="164.7" width="1" height="1.2" fill="#569cd6"/><rect x="1267" y="164.1" width="1" height="1.8" fill="#569cd6"/><rect x="1268" y="164.7" width="1" height="1.2" fill="#569cd6"/><rect x="1269" y="164.7" width="1" height="1.2" fill="#569cd6"/><rect x="1270" y="164.7" width="1" height="1.2" fill="#569cd6"/><rect x="1272" y="164.1" width="1" height="1.8" fill="#dcdcaa"/><rect x="1273" y="164.7" width="1" height="1.2" fill="#dcdcaa"/><rect x="1274" y="164.7" width="1" height="1.2" fill="#dcdcaa"/><rect x="1275" y="164.1" width="1" height="1.8" fill="#dcdcaa"/><rect x="1276" y="164.7" width="1" height="1.2" fill="#dcdcaa"/><rect x="1277" y="164.7" width="1" height="1.2" fill="#dcdcaa"/><rect x="1278" y="164.7" width="1" height="1.3" fill="#dcdcaa"/><rect x="1279" y="164.1" width="1" height="1.8" fill="#da70d6"/><rect x="1280" y="164.1" width="1" height="1.8" fill="#4ec9b0"/><rect x="1281" y="164.7" width="1" height="1.2" fill="#4ec9b0"/><rect x="1282" y="164.7" width="1" height="1.3" fill="#4ec9b0"/><rect x="1283" y="164.7" width="1" height="1.2" fill="#4ec9b0"/><rect x="1284" y="164.7" width="1" height="1.2" fill="#4ec9b0"/><rect x="1285" y="164.7" width="1" height="1.2" fill="#4ec9b0"/><rect x="1286" y="164.1" width="1" height="1.8" fill="#4ec9b0"/><rect x="1288" y="164.1" width="1" height="1.8" fill="#9cdcfe"/><rect x="1289" y="164.7" width="1" height="1.2" fill="#9cdcfe"/><rect x="1290" y="164.7" width="1" height="1.2" fill="#9cdcfe"/><rect x="1291" y="164.7" width="1" height="1.3" fill="#9cdcfe"/><rect x="1292" y="164.7" width="1" height="1.2" fill="#9cdcfe"/><rect x="1293" y="164.7" width="1" height="1.2" fill="#9cdcfe"/><rect x="1294" y="164.7" width="1" height="1.2" fill="#9cdcfe"/><rect x="1295" y="164.1" width="1" height="1.8" fill="#9cdcfe"/><rect x="1296" y="164.1" width="1" height="1.8" fill="#da70d6"/><rect x="1297" y="164.1" width="1" height="1.8" fill="#cccccc"/><rect x="1299" y="164.1" width="1" height="1.8" fill="#4ec9b0"/><rect x="1300" y="164.7" width="1" height="1.2" fill="#4ec9b0"/><rect x="1301" y="164.1" width="1" height="1.8" fill="#4ec9b0"/><rect x="1302" y="164.7" width="1" height="1.2" fill="#4ec9b0"/><rect x="1303" y="164.7" width="1" height="1.2" fill="#4ec9b0"/><rect x="1304" y="164.7" width="1" height="1.2" fill="#4ec9b0"/><rect x="1305" y="164.7" width="1" height="1.2" fill="#4ec9b0"/><rect x="1306" y="164.1" width="1" height="1.8" fill="#4ec9b0"/><rect x="1307" y="164.1" width="1" height="1.8" fill="#4ec9b0"/><rect x="1308" y="164.7" width="1" height="1.2" fill="#4ec9b0"/><rect x="1309" y="164.7" width="1" height="1.2" fill="#4ec9b0"/><rect x="1310" y="164.7" width="1" height="1.3" fill="#4ec9b0"/><rect x="1311" y="164.7" width="1" height="1.2" fill="#4ec9b0"/><rect x="1312" y="164.7" width="1" height="1.2" fill="#4ec9b0"/><rect x="1313" y="164.7" width="1" height="1.2" fill="#4ec9b0"/><rect x="1314" y="164.7" width="1" height="1.2" fill="#4ec9b0"/><rect x="1256" y="166.1" width="1" height="1.8" fill="#da70d6"/><rect x="1260" y="168.1" width="1" height="1.8" fill="#4ec9b0"/><rect x="1261" y="168.7" width="1" height="1.2" fill="#4ec9b0"/><rect x="1262" y="168.1" width="1" height="1.8" fill="#4ec9b0"/><rect x="1263" y="168.1" width="1" height="1.8" fill="#4ec9b0"/><rect x="1264" y="168.1" width="1" height="1.8" fill="#cccccc"/><rect x="1265" y="168.1" width="1" height="1.8" fill="#cccccc"/><rect x="1266" y="168.7" width="1" height="1.3" fill="#dcdcaa"/><rect x="1267" y="168.7" width="1" height="1.2" fill="#dcdcaa"/><rect x="1268" y="168.7" width="1" height="1.2" fill="#dcdcaa"/><rect x="1269" y="168.7" width="1" height="1.2" fill="#dcdcaa"/><rect x="1270" y="168.1" width="1" height="1.8" fill="#dcdcaa"/><rect x="1271" y="168.1" width="1" height="1.8" fill="#da70d6"/><rect x="1272" y="168.1" width="1" height="1.8" fill="#ce9178"/><rect x="1273" y="168.7" width="1" height="1.2" fill="#ce9178"/><rect x="1274" y="168.7" width="1" height="1.2" fill="#ce9178"/><rect x="1275" y="168.1" width="1" height="1.8" fill="#ce9178"/><rect x="1276" y="168.1" width="1" height="1.8" fill="#ce9178"/><rect x="1277" y="168.1" width="1" height="1.8" fill="#da70d6"/><rect x="1278" y="169.1" width="1" height="0.8" fill="#cccccc"/><rect x="1279" y="168.1" width="1" height="1.8" fill="#cccccc"/><rect x="1280" y="168.1" width="1" height="1.8" fill="#dcdcaa"/><rect x="1281" y="168.7" width="1" height="1.2" fill="#dcdcaa"/><rect x="1282" y="168.7" width="1" height="1.3" fill="#dcdcaa"/><rect x="1283" y="168.7" width="1" height="1.2" fill="#dcdcaa"/><rect x="1284" y="168.7" width="1" height="1.2" fill="#dcdcaa"/><rect x="1285" y="168.1" width="1" height="1.8" fill="#dcdcaa"/><rect x="1286" y="168.1" width="1" height="1.8" fill="#da70d6"/><rect x="1287" y="168.1" width="1" height="1.8" fill="#da70d6"/><rect x="1288" y="168.1" width="1" height="1.8" fill="#cccccc"/><rect x="1260" y="172.1" width="1" height="1.8" fill="#9cdcfe"/><rect x="1261" y="172.7" width="1" height="1.2" fill="#9cdcfe"/><rect x="1262" y="172.7" width="1" height="1.2" fill="#9cdcfe"/><rect x="1263" y="172.7" width="1" height="1.3" fill="#9cdcfe"/><rect x="1264" y="172.7" width="1" height="1.2" fill="#9cdcfe"/><rect x="1265" y="172.7" width="1" height="1.2" fill="#9cdcfe"/><rect x="1266" y="172.7" width="1" height="1.2" fill="#9cdcfe"/><rect x="1267" y="172.1" width="1" height="1.8" fill="#9cdcfe"/><rect x="1268" y="173.1" width="1" height="0.8" fill="#cccccc"/><rect x="1269" y="172.1" width="1" height="1.8" fill="#cccccc"/><rect x="1270" y="172.7" width="1" height="1.2" fill="#dcdcaa"/><rect x="1271" y="172.7" width="1" height="1.2" fill="#dcdcaa"/><rect x="1272" y="172.7" width="1" height="1.2" fill="#dcdcaa"/><rect x="1273" y="172.7" width="1" height="1.2" fill="#dcdcaa"/><rect x="1274" y="172.7" width="1" height="1.2" fill="#dcdcaa"/><rect x="1275" y="172.7" width="1" height="1.2" fill="#dcdcaa"/><rect x="1276" y="172.7" width="1" height="1.2" fill="#dcdcaa"/><rect x="1277" y="172.1" width="1" height="1.8" fill="#da70d6"/><rect x="1278" y="172.1" width="1" height="1.8" fill="#da70d6"/><rect x="1279" y="173.1" width="1" height="0.8" fill="#cccccc"/><rect x="1280" y="172.1" width="1" height="1.8" fill="#cccccc"/><rect x="1281" y="172.7" width="1" height="1.2" fill="#dcdcaa"/><rect x="1282" y="172.7" width="1" height="1.2" fill="#dcdcaa"/><rect x="1283" y="172.7" width="1" height="1.2" fill="#dcdcaa"/><rect x="1284" y="172.7" width="1" height="1.2" fill="#dcdcaa"/><rect x="1285" y="172.1" width="1" height="1.8" fill="#dcdcaa"/><rect x="1286" y="172.7" width="1" height="1.2" fill="#dcdcaa"/><rect x="1287" y="172.1" width="1" height="1.8" fill="#dcdcaa"/><rect x="1288" y="172.7" width="1" height="1.2" fill="#dcdcaa"/><rect x="1289" y="172.1" width="1" height="1.8" fill="#dcdcaa"/><rect x="1290" y="172.7" width="1" height="1.2" fill="#dcdcaa"/><rect x="1291" y="172.1" width="1" height="1.8" fill="#da70d6"/><rect x="1292" y="172.1" width="1" height="1.8" fill="#da70d6"/><rect x="1293" y="172.1" width="1" height="1.8" fill="#cccccc"/><rect x="1260" y="176.1" width="1" height="1.8" fill="#9cdcfe"/><rect x="1261" y="176.7" width="1" height="1.2" fill="#9cdcfe"/><rect x="1262" y="176.7" width="1" height="1.2" fill="#9cdcfe"/><rect x="1263" y="176.7" width="1" height="1.3" fill="#9cdcfe"/><rect x="1264" y="176.7" width="1" height="1.2" fill="#9cdcfe"/><rect x="1265" y="176.7" width="1" height="1.2" fill="#9cdcfe"/><rect x="1266" y="176.7" width="1" height="1.2" fill="#9cdcfe"/><rect x="1267" y="176.1" width="1" height="1.8" fill="#9cdcfe"/><rect x="1268" y="177.1" width="1" height="0.8" fill="#cccccc"/><rect x="1269" y="176.1" width="1" height="1.8" fill="#cccccc"/><rect x="1270" y="176.7" width="1" height="1.2" fill="#dcdcaa"/><rect x="1271" y="176.7" width="1" height="1.2" fill="#dcdcaa"/><rect x="1272" y="176.7" width="1" height="1.2" fill="#dcdcaa"/><rect x="1273" y="176.7" width="1" height="1.2" fill="#dcdcaa"/><rect x="1274" y="176.7" width="1" height="1.2" fill="#dcdcaa"/><rect x="1275" y="176.7" width="1" height="1.2" fill="#dcdcaa"/><rect x="1276" y="176.7" width="1" height="1.2" fill="#dcdcaa"/><rect x="1277" y="176.1" width="1" height="1.8" fill="#da70d6"/><rect x="1278" y="176.1" width="1" height="1.8" fill="#da70d6"/><rect x="1279" y="177.1" width="1" height="0.8" fill="#cccccc"/><rect x="1280" y="176.1" width="1" height="1.8" fill="#cccccc"/><rect x="1281" y="176.7" width="1" height="1.2" fill="#dcdcaa"/><rect x="1282" y="176.7" width="1" height="1.2" fill="#dcdcaa"/><rect x="1283" y="176.7" width="1" height="1.3" fill="#dcdcaa"/><rect x="1284" y="176.7" width="1" height="1.2" fill="#dcdcaa"/><rect x="1285" y="176.7" width="1" height="1.2" fill="#dcdcaa"/><rect x="1286" y="176.7" width="1" height="1.2" fill="#dcdcaa"/><rect x="1287" y="176.7" width="1" height="1.2" fill="#dcdcaa"/><rect x="1288" y="176.7" width="1" height="1.2" fill="#dcdcaa"/><rect x="1289" y="176.1" width="1" height="1.8" fill="#dcdcaa"/><rect x="1290" y="176.7" width="1" height="1.2" fill="#dcdcaa"/><rect x="1291" y="176.1" width="1" height="1.8" fill="#dcdcaa"/><rect x="1292" y="176.7" width="1" height="1.2" fill="#dcdcaa"/><rect x="1293" y="176.1" width="1" height="1.8" fill="#dcdcaa"/><rect x="1294" y="176.7" width="1" height="1.2" fill="#dcdcaa"/><rect x="1295" y="176.7" width="1" height="1.2" fill="#dcdcaa"/><rect x="1296" y="176.1" width="1" height="1.8" fill="#da70d6"/><rect x="1297" y="176.1" width="1" height="1.8" fill="#da70d6"/><rect x="1298" y="176.1" width="1" height="1.8" fill="#cccccc"/><rect x="1260" y="180.7" width="1" height="1.2" fill="#c586c0"/><rect x="1261" y="180.7" width="1" height="1.2" fill="#c586c0"/><rect x="1262" y="180.1" width="1" height="1.8" fill="#c586c0"/><rect x="1263" y="180.7" width="1" height="1.2" fill="#c586c0"/><rect x="1264" y="180.7" width="1" height="1.2" fill="#c586c0"/><rect x="1265" y="180.7" width="1" height="1.2" fill="#c586c0"/><rect x="1267" y="180.7" width="1" height="1.2" fill="#dcdcaa"/><rect x="1268" y="180.7" width="1" height="1.2" fill="#dcdcaa"/><rect x="1269" y="180.1" width="1" height="1.8" fill="#dcdcaa"/><rect x="1270" y="180.7" width="1" height="1.2" fill="#dcdcaa"/><rect x="1271" y="180.7" width="1" height="1.2" fill="#dcdcaa"/><rect x="1272" y="180.7" width="1" height="1.2" fill="#dcdcaa"/><rect x="1273" y="180.7" width="1" height="1.2" fill="#dcdcaa"/><rect x="1274" y="180.1" width="1" height="1.8" fill="#dcdcaa"/><rect x="1275" y="180.1" width="1" height="1.8" fill="#da70d6"/><rect x="1276" y="180.1" width="1" height="1.8" fill="#ce9178"/><rect x="1277" y="180.1" width="1" height="1.8" fill="#ce9178"/><rect x="1278" y="180.1" width="1" height="1.8" fill="#ce9178"/><rect x="1279" y="180.1" width="1" height="1.8" fill="#da70d6"/><rect x="1280" y="180.1" width="1" height="1.8" fill="#cccccc"/><rect x="1256" y="182.1" width="1" height="1.8" fill="#da70d6"/><rect x="1252" y="184.1" width="1" height="1.8" fill="#ffd700"/></g><rect x="1252" y="108" width="36" height="2" fill="#264f78"/></svg>
<div class="a" style="left:1352px;top:92px;width:14px;height:252px;background:#474747"></div>
<div class="a" style="left:1352px;top:344px;width:1px;height:400px;background:#171717"></div>
<div class="a" style="left:1353px;top:159px;width:13px;height:2px;background:#a0a0a0"></div>
<div id="status" class="a"></div>
<div class="a" style="left:0;top:766px;width:1366px;height:2px;background:#020202"></div>
<div class="a" style="left:0;top:745px;width:34px;height:21px;background:#0078d4"></div>
<svg style="left:0;top:744px" width="34" height="22" viewBox="0 744 34 22"><path d="M13.2 752.4 16.9 756.3 13.2 760.3M21.3 749.2 17.5 752.9 21.3 756.6" fill="none" stroke="#ffffff" stroke-width="1.2"/></svg>
<svg style="left:42px;top:748px" width="14" height="14" viewBox="0 0 14 14"><circle cx="7" cy="7" r="6" fill="none" stroke="#cccccc" stroke-width="1.1"/><path d="M4.5 4.5 9.5 9.5M9.5 4.5 4.5 9.5" stroke="#cccccc" stroke-width="1.1"/></svg>
<div class="a st" style="left:60px;top:745px;height:22px;line-height:22px">0</div>
<svg style="left:69px;top:748px" width="14" height="13" viewBox="0 0 14 13"><path d="M7 0.8 13.2 12.2H0.8Z" fill="none" stroke="#cccccc" stroke-width="1.1" stroke-linejoin="round"/><path d="M7 4.5V8.5M7 9.6V10.8" stroke="#cccccc" stroke-width="1.1"/></svg>
<div class="a st" style="left:87px;top:745px;height:22px;line-height:22px">0</div>
<svg style="left:111px;top:748px" width="10" height="14" viewBox="0 0 10 14"><path d="M6.5 0.6 1.2 7.6H4.8L3.2 13.4 8.8 5.8H5.2L6.5 0.6Z" fill="none" stroke="#cccccc" stroke-width="1.1" stroke-linejoin="round"/></svg>
<div class="a st" style="left:823px;top:745px;height:22px;line-height:22px">Ln 9, Col 1 (36 selected)</div>
<div class="a st" style="left:964px;top:745px;height:22px;line-height:22px">Spaces: 4</div>
<div class="a st" style="left:1029px;top:745px;height:22px;line-height:22px">UTF-8</div>
<div class="a st" style="left:1077px;top:745px;height:22px;line-height:22px">LF</div>
<div class="a st" style="left:1106px;top:745px;height:22px;line-height:22px;font-size:12px;letter-spacing:2.5px">{}</div>
<div class="a st" style="left:1125px;top:745px;height:22px;line-height:22px">PHP</div>
<svg style="left:1158px;top:746px" width="24" height="18" viewBox="1158 746 24 18"><path fill="#cccccc" d="M1163.5 752Q1163.5 748.6 1167.2 748.6Q1169 748.6 1169.9 749.6Q1170.8 748.6 1172.6 748.6Q1176.3 748.6 1176.3 752L1176.2 754.4Q1177.5 755.2 1177.5 757Q1177.5 760.9 1169.9 760.9Q1162.3 760.9 1162.3 757Q1162.3 755.2 1163.6 754.4Z"/><circle cx="1167.3" cy="751.9" r="1.6" fill="#181818"/><circle cx="1172.5" cy="751.9" r="1.6" fill="#181818"/><rect x="1166" y="755.2" width="7.9" height="3.6" fill="#181818"/><rect x="1167.8" y="755.6" width="1.2" height="3" fill="#cccccc"/><rect x="1170.8" y="755.6" width="1.2" height="3" fill="#cccccc"/></svg>
<svg style="left:1194px;top:749px" width="12" height="13" viewBox="0 0 12 13"><path d="M2.4 8.6Q0.8 7.2 0.8 5.4Q0.8 0.8 6 0.8Q11.2 0.8 11.2 5.4Q11.2 7.2 9.6 8.6 M4 6.9Q3.2 6.2 3.2 5.3Q3.2 2.9 6 2.9Q8.8 2.9 8.8 5.3Q8.8 6.2 8 6.9" fill="none" stroke="#cccccc" stroke-width="1.1"/><circle cx="6" cy="5.3" r="1.1" fill="#cccccc"/><path d="M6 6.5V12.4" stroke="#cccccc" stroke-width="1.6"/></svg>
<div class="a st" style="left:1210px;top:745px;height:22px;line-height:22px">Go Live</div>
<svg style="left:1265px;top:749px" width="14" height="14" viewBox="0 0 14 14"><circle cx="7" cy="6.5" r="5.8" fill="none" stroke="#cccccc" stroke-width="1.1"/><path d="M3 10.5 11 2.5" stroke="#cccccc" stroke-width="1.1"/></svg>
<div class="a st" style="left:1282px;top:745px;height:22px;line-height:22px">Prettier</div>
<svg style="left:1338px;top:748px" width="12" height="14" viewBox="0 0 12 14"><path d="M2 9.8V5.6Q2 1.4 6 1.4Q10 1.4 10 5.6V9.8L11.2 11H0.8Z M4.5 12.2Q6 13.6 7.5 12.2 M6 0.4V1.4" fill="none" stroke="#cccccc" stroke-width="1.1" stroke-linejoin="round"/></svg>
</body></html>
